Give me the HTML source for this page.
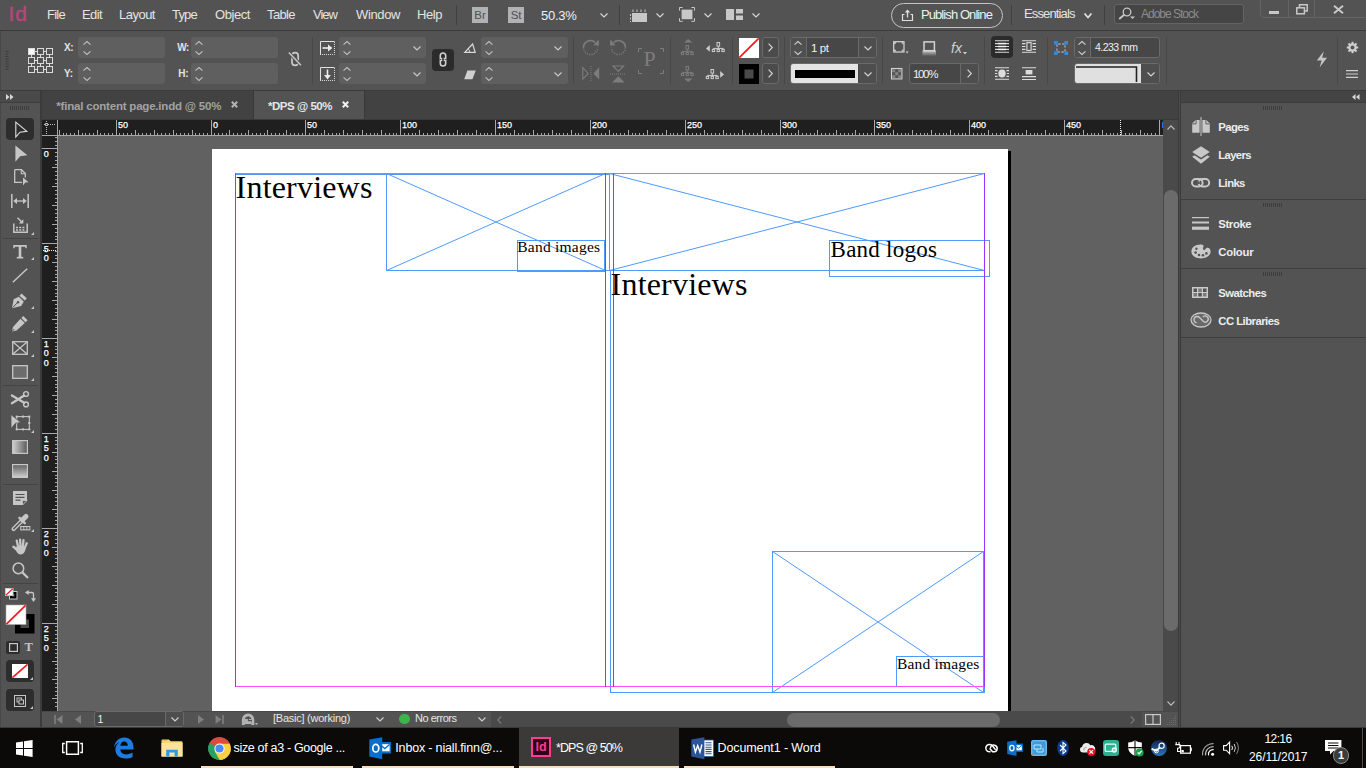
<!DOCTYPE html>
<html lang="en"><head><meta charset="utf-8"><title>*DPS @ 50% - Adobe InDesign</title>
<style>
html,body{margin:0;padding:0;}
body{width:1366px;height:768px;overflow:hidden;background:#535353;position:relative;font-family:"Liberation Sans",sans-serif;}
.b{position:absolute;box-sizing:border-box;}
.t{position:absolute;white-space:nowrap;}
.sf{font-family:"Liberation Serif",serif;}
svg{overflow:visible;}
</style></head>
<body>
<!-- canvas -->
<div class="b" style="left:42px;top:91px;width:1136px;height:29px;background:#424242;"></div>
<div class="b" style="left:42px;top:91px;width:212px;height:29px;background:#424242;border-right:1px solid #383838;"></div>
<span class="t" style="left:56.3px;top:98.5px;font-size:11.5px;line-height:14px;color:#a2a2a2;font-weight:700;letter-spacing:-0.20px;">*final content page.indd @ 50%</span>
<svg class="b" style="left:230.7px;top:101.3px;" width="7" height="7" viewBox="0 0 7 7"><path d="M0.8 0.8L6.2 6.2M6.2 0.8L0.8 6.2" stroke="#b4b4b4" stroke-width="2" fill="none"/></svg>
<div class="b" style="left:254px;top:91px;width:110px;height:29px;background:#535353;"></div>
<span class="t" style="left:268.0px;top:98.5px;font-size:11.5px;line-height:14px;color:#e6e6e6;font-weight:700;letter-spacing:-0.47px;">*DPS @ 50%</span>
<svg class="b" style="left:341.5px;top:101.3px;" width="7" height="7" viewBox="0 0 7 7"><path d="M0.8 0.8L6.2 6.2M6.2 0.8L0.8 6.2" stroke="#f0f0f0" stroke-width="2" fill="none"/></svg>
<div class="b" style="left:364px;top:91px;width:1px;height:29px;background:#3a3a3a;"></div>
<div class="b" style="left:42px;top:119px;width:1136px;height:1px;background:#3a3a3a;"></div>
<div class="b" style="left:58px;top:136px;width:1105px;height:575px;background:#616161;"></div>
<div class="b" style="left:212px;top:149px;width:796px;height:562px;background:#fff;"></div>
<div class="b" style="left:1008px;top:151px;width:2.8px;height:560px;background:#000;"></div>
<svg class="b" style="left:0px;top:0px;" width="1366" height="768" viewBox="0 0 1366 768"><rect x="235.5" y="174.5" width="370.0" height="512.0" fill="none" stroke="#4f99ff"/><line x1="605" y1="174.5" x2="610" y2="174.5" stroke="#4f99ff" stroke-width="1"/><line x1="605" y1="270.5" x2="610" y2="270.5" stroke="#4f99ff" stroke-width="1"/><rect x="386.5" y="173.5" width="219.0" height="97.0" fill="none" stroke="#4f99ff"/><line x1="386.5" y1="173.5" x2="605.5" y2="270.5" stroke="#4f99ff" stroke-width="1"/><line x1="386.5" y1="270.5" x2="605.5" y2="173.5" stroke="#4f99ff" stroke-width="1"/><rect x="517.5" y="240.5" width="87.0" height="31.0" fill="none" stroke="#4f99ff"/><rect x="609.5" y="173.5" width="375.0" height="97.0" fill="none" stroke="#4f99ff"/><line x1="609.5" y1="173.5" x2="984.5" y2="270.5" stroke="#4f99ff" stroke-width="1"/><line x1="609.5" y1="270.5" x2="984.5" y2="173.5" stroke="#4f99ff" stroke-width="1"/><rect x="829.5" y="240.5" width="160.0" height="36.0" fill="none" stroke="#4f99ff"/><rect x="610.5" y="270.5" width="374.0" height="422.0" fill="none" stroke="#4f99ff"/><rect x="772.5" y="551.5" width="211.0" height="141.0" fill="none" stroke="#4f99ff"/><line x1="772.5" y1="551.5" x2="983.5" y2="692.5" stroke="#4f99ff" stroke-width="1"/><line x1="772.5" y1="692.5" x2="983.5" y2="551.5" stroke="#4f99ff" stroke-width="1"/><rect x="896.5" y="656.5" width="87.0" height="30.0" fill="none" stroke="#4f99ff"/><line x1="235" y1="173.5" x2="985" y2="173.5" stroke="#ff4fff" stroke-width="1"/><line x1="235" y1="686.5" x2="985" y2="686.5" stroke="#ff4fff" stroke-width="1"/><line x1="235.5" y1="173" x2="235.5" y2="687" stroke="#9933ff" stroke-width="1"/><line x1="605.5" y1="173" x2="605.5" y2="687" stroke="#9933ff" stroke-width="1"/><line x1="613.5" y1="173" x2="613.5" y2="687" stroke="#9933ff" stroke-width="1"/><line x1="984.5" y1="173" x2="984.5" y2="687" stroke="#9933ff" stroke-width="1"/></svg>
<span class="t sf" style="left:235.6px;top:168.2px;font-size:32px;line-height:38px;color:#000;letter-spacing:0.19px;">Interviews</span>
<span class="t sf" style="left:610.6px;top:265.2px;font-size:32px;line-height:38px;color:#000;letter-spacing:0.19px;">Interviews</span>
<span class="t sf" style="left:517.3px;top:237.1px;font-size:15.5px;line-height:19px;color:#000;letter-spacing:0.23px;">Band images</span>
<span class="t sf" style="left:897.0px;top:654.1px;font-size:15.5px;line-height:19px;color:#000;letter-spacing:0.18px;">Band images</span>
<span class="t sf" style="left:830.6px;top:235.6px;font-size:23px;line-height:28px;color:#000;letter-spacing:0.24px;">Band logos</span>
<div class="b" style="left:42px;top:120px;width:1121px;height:16px;background:#1f1f1f;"></div>
<div class="b" style="left:42px;top:136px;width:16px;height:575px;background:#1f1f1f;"></div>
<svg class="b" style="left:0px;top:0px;shape-rendering:crispEdges;" width="1366" height="768" viewBox="0 0 1366 768"><line x1="59.5" y1="130" x2="59.5" y2="135" stroke="#a8a8a8"/><line x1="63.5" y1="133" x2="63.5" y2="135" stroke="#a8a8a8"/><line x1="66.5" y1="133" x2="66.5" y2="135" stroke="#a8a8a8"/><line x1="70.5" y1="133" x2="70.5" y2="135" stroke="#a8a8a8"/><line x1="74.5" y1="133" x2="74.5" y2="135" stroke="#a8a8a8"/><line x1="78.5" y1="130" x2="78.5" y2="135" stroke="#a8a8a8"/><line x1="82.5" y1="133" x2="82.5" y2="135" stroke="#a8a8a8"/><line x1="85.5" y1="133" x2="85.5" y2="135" stroke="#a8a8a8"/><line x1="89.5" y1="133" x2="89.5" y2="135" stroke="#a8a8a8"/><line x1="93.5" y1="133" x2="93.5" y2="135" stroke="#a8a8a8"/><line x1="97.5" y1="130" x2="97.5" y2="135" stroke="#a8a8a8"/><line x1="100.5" y1="133" x2="100.5" y2="135" stroke="#a8a8a8"/><line x1="104.5" y1="133" x2="104.5" y2="135" stroke="#a8a8a8"/><line x1="108.5" y1="133" x2="108.5" y2="135" stroke="#a8a8a8"/><line x1="112.5" y1="133" x2="112.5" y2="135" stroke="#a8a8a8"/><line x1="116.5" y1="120" x2="116.5" y2="135" stroke="#a8a8a8"/><line x1="119.5" y1="133" x2="119.5" y2="135" stroke="#a8a8a8"/><line x1="123.5" y1="133" x2="123.5" y2="135" stroke="#a8a8a8"/><line x1="127.5" y1="133" x2="127.5" y2="135" stroke="#a8a8a8"/><line x1="131.5" y1="133" x2="131.5" y2="135" stroke="#a8a8a8"/><line x1="135.5" y1="130" x2="135.5" y2="135" stroke="#a8a8a8"/><line x1="138.5" y1="133" x2="138.5" y2="135" stroke="#a8a8a8"/><line x1="142.5" y1="133" x2="142.5" y2="135" stroke="#a8a8a8"/><line x1="146.5" y1="133" x2="146.5" y2="135" stroke="#a8a8a8"/><line x1="150.5" y1="133" x2="150.5" y2="135" stroke="#a8a8a8"/><line x1="154.5" y1="130" x2="154.5" y2="135" stroke="#a8a8a8"/><line x1="157.5" y1="133" x2="157.5" y2="135" stroke="#a8a8a8"/><line x1="161.5" y1="133" x2="161.5" y2="135" stroke="#a8a8a8"/><line x1="165.5" y1="133" x2="165.5" y2="135" stroke="#a8a8a8"/><line x1="169.5" y1="133" x2="169.5" y2="135" stroke="#a8a8a8"/><line x1="173.5" y1="130" x2="173.5" y2="135" stroke="#a8a8a8"/><line x1="176.5" y1="133" x2="176.5" y2="135" stroke="#a8a8a8"/><line x1="180.5" y1="133" x2="180.5" y2="135" stroke="#a8a8a8"/><line x1="184.5" y1="133" x2="184.5" y2="135" stroke="#a8a8a8"/><line x1="188.5" y1="133" x2="188.5" y2="135" stroke="#a8a8a8"/><line x1="192.5" y1="130" x2="192.5" y2="135" stroke="#a8a8a8"/><line x1="195.5" y1="133" x2="195.5" y2="135" stroke="#a8a8a8"/><line x1="199.5" y1="133" x2="199.5" y2="135" stroke="#a8a8a8"/><line x1="203.5" y1="133" x2="203.5" y2="135" stroke="#a8a8a8"/><line x1="207.5" y1="133" x2="207.5" y2="135" stroke="#a8a8a8"/><line x1="211.5" y1="120" x2="211.5" y2="135" stroke="#a8a8a8"/><line x1="214.5" y1="133" x2="214.5" y2="135" stroke="#a8a8a8"/><line x1="218.5" y1="133" x2="218.5" y2="135" stroke="#a8a8a8"/><line x1="222.5" y1="133" x2="222.5" y2="135" stroke="#a8a8a8"/><line x1="226.5" y1="133" x2="226.5" y2="135" stroke="#a8a8a8"/><line x1="229.5" y1="130" x2="229.5" y2="135" stroke="#a8a8a8"/><line x1="233.5" y1="133" x2="233.5" y2="135" stroke="#a8a8a8"/><line x1="237.5" y1="133" x2="237.5" y2="135" stroke="#a8a8a8"/><line x1="241.5" y1="133" x2="241.5" y2="135" stroke="#a8a8a8"/><line x1="245.5" y1="133" x2="245.5" y2="135" stroke="#a8a8a8"/><line x1="248.5" y1="130" x2="248.5" y2="135" stroke="#a8a8a8"/><line x1="252.5" y1="133" x2="252.5" y2="135" stroke="#a8a8a8"/><line x1="256.5" y1="133" x2="256.5" y2="135" stroke="#a8a8a8"/><line x1="260.5" y1="133" x2="260.5" y2="135" stroke="#a8a8a8"/><line x1="264.5" y1="133" x2="264.5" y2="135" stroke="#a8a8a8"/><line x1="267.5" y1="130" x2="267.5" y2="135" stroke="#a8a8a8"/><line x1="271.5" y1="133" x2="271.5" y2="135" stroke="#a8a8a8"/><line x1="275.5" y1="133" x2="275.5" y2="135" stroke="#a8a8a8"/><line x1="279.5" y1="133" x2="279.5" y2="135" stroke="#a8a8a8"/><line x1="283.5" y1="133" x2="283.5" y2="135" stroke="#a8a8a8"/><line x1="286.5" y1="130" x2="286.5" y2="135" stroke="#a8a8a8"/><line x1="290.5" y1="133" x2="290.5" y2="135" stroke="#a8a8a8"/><line x1="294.5" y1="133" x2="294.5" y2="135" stroke="#a8a8a8"/><line x1="298.5" y1="133" x2="298.5" y2="135" stroke="#a8a8a8"/><line x1="302.5" y1="133" x2="302.5" y2="135" stroke="#a8a8a8"/><line x1="305.5" y1="120" x2="305.5" y2="135" stroke="#a8a8a8"/><line x1="309.5" y1="133" x2="309.5" y2="135" stroke="#a8a8a8"/><line x1="313.5" y1="133" x2="313.5" y2="135" stroke="#a8a8a8"/><line x1="317.5" y1="133" x2="317.5" y2="135" stroke="#a8a8a8"/><line x1="321.5" y1="133" x2="321.5" y2="135" stroke="#a8a8a8"/><line x1="324.5" y1="130" x2="324.5" y2="135" stroke="#a8a8a8"/><line x1="328.5" y1="133" x2="328.5" y2="135" stroke="#a8a8a8"/><line x1="332.5" y1="133" x2="332.5" y2="135" stroke="#a8a8a8"/><line x1="336.5" y1="133" x2="336.5" y2="135" stroke="#a8a8a8"/><line x1="339.5" y1="133" x2="339.5" y2="135" stroke="#a8a8a8"/><line x1="343.5" y1="130" x2="343.5" y2="135" stroke="#a8a8a8"/><line x1="347.5" y1="133" x2="347.5" y2="135" stroke="#a8a8a8"/><line x1="351.5" y1="133" x2="351.5" y2="135" stroke="#a8a8a8"/><line x1="355.5" y1="133" x2="355.5" y2="135" stroke="#a8a8a8"/><line x1="358.5" y1="133" x2="358.5" y2="135" stroke="#a8a8a8"/><line x1="362.5" y1="130" x2="362.5" y2="135" stroke="#a8a8a8"/><line x1="366.5" y1="133" x2="366.5" y2="135" stroke="#a8a8a8"/><line x1="370.5" y1="133" x2="370.5" y2="135" stroke="#a8a8a8"/><line x1="374.5" y1="133" x2="374.5" y2="135" stroke="#a8a8a8"/><line x1="377.5" y1="133" x2="377.5" y2="135" stroke="#a8a8a8"/><line x1="381.5" y1="130" x2="381.5" y2="135" stroke="#a8a8a8"/><line x1="385.5" y1="133" x2="385.5" y2="135" stroke="#a8a8a8"/><line x1="389.5" y1="133" x2="389.5" y2="135" stroke="#a8a8a8"/><line x1="393.5" y1="133" x2="393.5" y2="135" stroke="#a8a8a8"/><line x1="396.5" y1="133" x2="396.5" y2="135" stroke="#a8a8a8"/><line x1="400.5" y1="120" x2="400.5" y2="135" stroke="#a8a8a8"/><line x1="404.5" y1="133" x2="404.5" y2="135" stroke="#a8a8a8"/><line x1="408.5" y1="133" x2="408.5" y2="135" stroke="#a8a8a8"/><line x1="412.5" y1="133" x2="412.5" y2="135" stroke="#a8a8a8"/><line x1="415.5" y1="133" x2="415.5" y2="135" stroke="#a8a8a8"/><line x1="419.5" y1="130" x2="419.5" y2="135" stroke="#a8a8a8"/><line x1="423.5" y1="133" x2="423.5" y2="135" stroke="#a8a8a8"/><line x1="427.5" y1="133" x2="427.5" y2="135" stroke="#a8a8a8"/><line x1="431.5" y1="133" x2="431.5" y2="135" stroke="#a8a8a8"/><line x1="434.5" y1="133" x2="434.5" y2="135" stroke="#a8a8a8"/><line x1="438.5" y1="130" x2="438.5" y2="135" stroke="#a8a8a8"/><line x1="442.5" y1="133" x2="442.5" y2="135" stroke="#a8a8a8"/><line x1="446.5" y1="133" x2="446.5" y2="135" stroke="#a8a8a8"/><line x1="449.5" y1="133" x2="449.5" y2="135" stroke="#a8a8a8"/><line x1="453.5" y1="133" x2="453.5" y2="135" stroke="#a8a8a8"/><line x1="457.5" y1="130" x2="457.5" y2="135" stroke="#a8a8a8"/><line x1="461.5" y1="133" x2="461.5" y2="135" stroke="#a8a8a8"/><line x1="465.5" y1="133" x2="465.5" y2="135" stroke="#a8a8a8"/><line x1="468.5" y1="133" x2="468.5" y2="135" stroke="#a8a8a8"/><line x1="472.5" y1="133" x2="472.5" y2="135" stroke="#a8a8a8"/><line x1="476.5" y1="130" x2="476.5" y2="135" stroke="#a8a8a8"/><line x1="480.5" y1="133" x2="480.5" y2="135" stroke="#a8a8a8"/><line x1="484.5" y1="133" x2="484.5" y2="135" stroke="#a8a8a8"/><line x1="487.5" y1="133" x2="487.5" y2="135" stroke="#a8a8a8"/><line x1="491.5" y1="133" x2="491.5" y2="135" stroke="#a8a8a8"/><line x1="495.5" y1="120" x2="495.5" y2="135" stroke="#a8a8a8"/><line x1="499.5" y1="133" x2="499.5" y2="135" stroke="#a8a8a8"/><line x1="503.5" y1="133" x2="503.5" y2="135" stroke="#a8a8a8"/><line x1="506.5" y1="133" x2="506.5" y2="135" stroke="#a8a8a8"/><line x1="510.5" y1="133" x2="510.5" y2="135" stroke="#a8a8a8"/><line x1="514.5" y1="130" x2="514.5" y2="135" stroke="#a8a8a8"/><line x1="518.5" y1="133" x2="518.5" y2="135" stroke="#a8a8a8"/><line x1="522.5" y1="133" x2="522.5" y2="135" stroke="#a8a8a8"/><line x1="525.5" y1="133" x2="525.5" y2="135" stroke="#a8a8a8"/><line x1="529.5" y1="133" x2="529.5" y2="135" stroke="#a8a8a8"/><line x1="533.5" y1="130" x2="533.5" y2="135" stroke="#a8a8a8"/><line x1="537.5" y1="133" x2="537.5" y2="135" stroke="#a8a8a8"/><line x1="541.5" y1="133" x2="541.5" y2="135" stroke="#a8a8a8"/><line x1="544.5" y1="133" x2="544.5" y2="135" stroke="#a8a8a8"/><line x1="548.5" y1="133" x2="548.5" y2="135" stroke="#a8a8a8"/><line x1="552.5" y1="130" x2="552.5" y2="135" stroke="#a8a8a8"/><line x1="556.5" y1="133" x2="556.5" y2="135" stroke="#a8a8a8"/><line x1="559.5" y1="133" x2="559.5" y2="135" stroke="#a8a8a8"/><line x1="563.5" y1="133" x2="563.5" y2="135" stroke="#a8a8a8"/><line x1="567.5" y1="133" x2="567.5" y2="135" stroke="#a8a8a8"/><line x1="571.5" y1="130" x2="571.5" y2="135" stroke="#a8a8a8"/><line x1="575.5" y1="133" x2="575.5" y2="135" stroke="#a8a8a8"/><line x1="578.5" y1="133" x2="578.5" y2="135" stroke="#a8a8a8"/><line x1="582.5" y1="133" x2="582.5" y2="135" stroke="#a8a8a8"/><line x1="586.5" y1="133" x2="586.5" y2="135" stroke="#a8a8a8"/><line x1="590.5" y1="120" x2="590.5" y2="135" stroke="#a8a8a8"/><line x1="594.5" y1="133" x2="594.5" y2="135" stroke="#a8a8a8"/><line x1="597.5" y1="133" x2="597.5" y2="135" stroke="#a8a8a8"/><line x1="601.5" y1="133" x2="601.5" y2="135" stroke="#a8a8a8"/><line x1="605.5" y1="133" x2="605.5" y2="135" stroke="#a8a8a8"/><line x1="609.5" y1="130" x2="609.5" y2="135" stroke="#a8a8a8"/><line x1="613.5" y1="133" x2="613.5" y2="135" stroke="#a8a8a8"/><line x1="616.5" y1="133" x2="616.5" y2="135" stroke="#a8a8a8"/><line x1="620.5" y1="133" x2="620.5" y2="135" stroke="#a8a8a8"/><line x1="624.5" y1="133" x2="624.5" y2="135" stroke="#a8a8a8"/><line x1="628.5" y1="130" x2="628.5" y2="135" stroke="#a8a8a8"/><line x1="632.5" y1="133" x2="632.5" y2="135" stroke="#a8a8a8"/><line x1="635.5" y1="133" x2="635.5" y2="135" stroke="#a8a8a8"/><line x1="639.5" y1="133" x2="639.5" y2="135" stroke="#a8a8a8"/><line x1="643.5" y1="133" x2="643.5" y2="135" stroke="#a8a8a8"/><line x1="647.5" y1="130" x2="647.5" y2="135" stroke="#a8a8a8"/><line x1="651.5" y1="133" x2="651.5" y2="135" stroke="#a8a8a8"/><line x1="654.5" y1="133" x2="654.5" y2="135" stroke="#a8a8a8"/><line x1="658.5" y1="133" x2="658.5" y2="135" stroke="#a8a8a8"/><line x1="662.5" y1="133" x2="662.5" y2="135" stroke="#a8a8a8"/><line x1="666.5" y1="130" x2="666.5" y2="135" stroke="#a8a8a8"/><line x1="670.5" y1="133" x2="670.5" y2="135" stroke="#a8a8a8"/><line x1="673.5" y1="133" x2="673.5" y2="135" stroke="#a8a8a8"/><line x1="677.5" y1="133" x2="677.5" y2="135" stroke="#a8a8a8"/><line x1="681.5" y1="133" x2="681.5" y2="135" stroke="#a8a8a8"/><line x1="685.5" y1="120" x2="685.5" y2="135" stroke="#a8a8a8"/><line x1="688.5" y1="133" x2="688.5" y2="135" stroke="#a8a8a8"/><line x1="692.5" y1="133" x2="692.5" y2="135" stroke="#a8a8a8"/><line x1="696.5" y1="133" x2="696.5" y2="135" stroke="#a8a8a8"/><line x1="700.5" y1="133" x2="700.5" y2="135" stroke="#a8a8a8"/><line x1="704.5" y1="130" x2="704.5" y2="135" stroke="#a8a8a8"/><line x1="707.5" y1="133" x2="707.5" y2="135" stroke="#a8a8a8"/><line x1="711.5" y1="133" x2="711.5" y2="135" stroke="#a8a8a8"/><line x1="715.5" y1="133" x2="715.5" y2="135" stroke="#a8a8a8"/><line x1="719.5" y1="133" x2="719.5" y2="135" stroke="#a8a8a8"/><line x1="723.5" y1="130" x2="723.5" y2="135" stroke="#a8a8a8"/><line x1="726.5" y1="133" x2="726.5" y2="135" stroke="#a8a8a8"/><line x1="730.5" y1="133" x2="730.5" y2="135" stroke="#a8a8a8"/><line x1="734.5" y1="133" x2="734.5" y2="135" stroke="#a8a8a8"/><line x1="738.5" y1="133" x2="738.5" y2="135" stroke="#a8a8a8"/><line x1="742.5" y1="130" x2="742.5" y2="135" stroke="#a8a8a8"/><line x1="745.5" y1="133" x2="745.5" y2="135" stroke="#a8a8a8"/><line x1="749.5" y1="133" x2="749.5" y2="135" stroke="#a8a8a8"/><line x1="753.5" y1="133" x2="753.5" y2="135" stroke="#a8a8a8"/><line x1="757.5" y1="133" x2="757.5" y2="135" stroke="#a8a8a8"/><line x1="761.5" y1="130" x2="761.5" y2="135" stroke="#a8a8a8"/><line x1="764.5" y1="133" x2="764.5" y2="135" stroke="#a8a8a8"/><line x1="768.5" y1="133" x2="768.5" y2="135" stroke="#a8a8a8"/><line x1="772.5" y1="133" x2="772.5" y2="135" stroke="#a8a8a8"/><line x1="776.5" y1="133" x2="776.5" y2="135" stroke="#a8a8a8"/><line x1="780.5" y1="120" x2="780.5" y2="135" stroke="#a8a8a8"/><line x1="783.5" y1="133" x2="783.5" y2="135" stroke="#a8a8a8"/><line x1="787.5" y1="133" x2="787.5" y2="135" stroke="#a8a8a8"/><line x1="791.5" y1="133" x2="791.5" y2="135" stroke="#a8a8a8"/><line x1="795.5" y1="133" x2="795.5" y2="135" stroke="#a8a8a8"/><line x1="798.5" y1="130" x2="798.5" y2="135" stroke="#a8a8a8"/><line x1="802.5" y1="133" x2="802.5" y2="135" stroke="#a8a8a8"/><line x1="806.5" y1="133" x2="806.5" y2="135" stroke="#a8a8a8"/><line x1="810.5" y1="133" x2="810.5" y2="135" stroke="#a8a8a8"/><line x1="814.5" y1="133" x2="814.5" y2="135" stroke="#a8a8a8"/><line x1="817.5" y1="130" x2="817.5" y2="135" stroke="#a8a8a8"/><line x1="821.5" y1="133" x2="821.5" y2="135" stroke="#a8a8a8"/><line x1="825.5" y1="133" x2="825.5" y2="135" stroke="#a8a8a8"/><line x1="829.5" y1="133" x2="829.5" y2="135" stroke="#a8a8a8"/><line x1="833.5" y1="133" x2="833.5" y2="135" stroke="#a8a8a8"/><line x1="836.5" y1="130" x2="836.5" y2="135" stroke="#a8a8a8"/><line x1="840.5" y1="133" x2="840.5" y2="135" stroke="#a8a8a8"/><line x1="844.5" y1="133" x2="844.5" y2="135" stroke="#a8a8a8"/><line x1="848.5" y1="133" x2="848.5" y2="135" stroke="#a8a8a8"/><line x1="852.5" y1="133" x2="852.5" y2="135" stroke="#a8a8a8"/><line x1="855.5" y1="130" x2="855.5" y2="135" stroke="#a8a8a8"/><line x1="859.5" y1="133" x2="859.5" y2="135" stroke="#a8a8a8"/><line x1="863.5" y1="133" x2="863.5" y2="135" stroke="#a8a8a8"/><line x1="867.5" y1="133" x2="867.5" y2="135" stroke="#a8a8a8"/><line x1="871.5" y1="133" x2="871.5" y2="135" stroke="#a8a8a8"/><line x1="874.5" y1="120" x2="874.5" y2="135" stroke="#a8a8a8"/><line x1="878.5" y1="133" x2="878.5" y2="135" stroke="#a8a8a8"/><line x1="882.5" y1="133" x2="882.5" y2="135" stroke="#a8a8a8"/><line x1="886.5" y1="133" x2="886.5" y2="135" stroke="#a8a8a8"/><line x1="890.5" y1="133" x2="890.5" y2="135" stroke="#a8a8a8"/><line x1="893.5" y1="130" x2="893.5" y2="135" stroke="#a8a8a8"/><line x1="897.5" y1="133" x2="897.5" y2="135" stroke="#a8a8a8"/><line x1="901.5" y1="133" x2="901.5" y2="135" stroke="#a8a8a8"/><line x1="905.5" y1="133" x2="905.5" y2="135" stroke="#a8a8a8"/><line x1="908.5" y1="133" x2="908.5" y2="135" stroke="#a8a8a8"/><line x1="912.5" y1="130" x2="912.5" y2="135" stroke="#a8a8a8"/><line x1="916.5" y1="133" x2="916.5" y2="135" stroke="#a8a8a8"/><line x1="920.5" y1="133" x2="920.5" y2="135" stroke="#a8a8a8"/><line x1="924.5" y1="133" x2="924.5" y2="135" stroke="#a8a8a8"/><line x1="927.5" y1="133" x2="927.5" y2="135" stroke="#a8a8a8"/><line x1="931.5" y1="130" x2="931.5" y2="135" stroke="#a8a8a8"/><line x1="935.5" y1="133" x2="935.5" y2="135" stroke="#a8a8a8"/><line x1="939.5" y1="133" x2="939.5" y2="135" stroke="#a8a8a8"/><line x1="943.5" y1="133" x2="943.5" y2="135" stroke="#a8a8a8"/><line x1="946.5" y1="133" x2="946.5" y2="135" stroke="#a8a8a8"/><line x1="950.5" y1="130" x2="950.5" y2="135" stroke="#a8a8a8"/><line x1="954.5" y1="133" x2="954.5" y2="135" stroke="#a8a8a8"/><line x1="958.5" y1="133" x2="958.5" y2="135" stroke="#a8a8a8"/><line x1="962.5" y1="133" x2="962.5" y2="135" stroke="#a8a8a8"/><line x1="965.5" y1="133" x2="965.5" y2="135" stroke="#a8a8a8"/><line x1="969.5" y1="120" x2="969.5" y2="135" stroke="#a8a8a8"/><line x1="973.5" y1="133" x2="973.5" y2="135" stroke="#a8a8a8"/><line x1="977.5" y1="133" x2="977.5" y2="135" stroke="#a8a8a8"/><line x1="981.5" y1="133" x2="981.5" y2="135" stroke="#a8a8a8"/><line x1="984.5" y1="133" x2="984.5" y2="135" stroke="#a8a8a8"/><line x1="988.5" y1="130" x2="988.5" y2="135" stroke="#a8a8a8"/><line x1="992.5" y1="133" x2="992.5" y2="135" stroke="#a8a8a8"/><line x1="996.5" y1="133" x2="996.5" y2="135" stroke="#a8a8a8"/><line x1="1000.5" y1="133" x2="1000.5" y2="135" stroke="#a8a8a8"/><line x1="1003.5" y1="133" x2="1003.5" y2="135" stroke="#a8a8a8"/><line x1="1007.5" y1="130" x2="1007.5" y2="135" stroke="#a8a8a8"/><line x1="1011.5" y1="133" x2="1011.5" y2="135" stroke="#a8a8a8"/><line x1="1015.5" y1="133" x2="1015.5" y2="135" stroke="#a8a8a8"/><line x1="1018.5" y1="133" x2="1018.5" y2="135" stroke="#a8a8a8"/><line x1="1022.5" y1="133" x2="1022.5" y2="135" stroke="#a8a8a8"/><line x1="1026.5" y1="130" x2="1026.5" y2="135" stroke="#a8a8a8"/><line x1="1030.5" y1="133" x2="1030.5" y2="135" stroke="#a8a8a8"/><line x1="1034.5" y1="133" x2="1034.5" y2="135" stroke="#a8a8a8"/><line x1="1037.5" y1="133" x2="1037.5" y2="135" stroke="#a8a8a8"/><line x1="1041.5" y1="133" x2="1041.5" y2="135" stroke="#a8a8a8"/><line x1="1045.5" y1="130" x2="1045.5" y2="135" stroke="#a8a8a8"/><line x1="1049.5" y1="133" x2="1049.5" y2="135" stroke="#a8a8a8"/><line x1="1053.5" y1="133" x2="1053.5" y2="135" stroke="#a8a8a8"/><line x1="1056.5" y1="133" x2="1056.5" y2="135" stroke="#a8a8a8"/><line x1="1060.5" y1="133" x2="1060.5" y2="135" stroke="#a8a8a8"/><line x1="1064.5" y1="120" x2="1064.5" y2="135" stroke="#a8a8a8"/><line x1="1068.5" y1="133" x2="1068.5" y2="135" stroke="#a8a8a8"/><line x1="1072.5" y1="133" x2="1072.5" y2="135" stroke="#a8a8a8"/><line x1="1075.5" y1="133" x2="1075.5" y2="135" stroke="#a8a8a8"/><line x1="1079.5" y1="133" x2="1079.5" y2="135" stroke="#a8a8a8"/><line x1="1083.5" y1="130" x2="1083.5" y2="135" stroke="#a8a8a8"/><line x1="1087.5" y1="133" x2="1087.5" y2="135" stroke="#a8a8a8"/><line x1="1091.5" y1="133" x2="1091.5" y2="135" stroke="#a8a8a8"/><line x1="1094.5" y1="133" x2="1094.5" y2="135" stroke="#a8a8a8"/><line x1="1098.5" y1="133" x2="1098.5" y2="135" stroke="#a8a8a8"/><line x1="1102.5" y1="130" x2="1102.5" y2="135" stroke="#a8a8a8"/><line x1="1106.5" y1="133" x2="1106.5" y2="135" stroke="#a8a8a8"/><line x1="1110.5" y1="133" x2="1110.5" y2="135" stroke="#a8a8a8"/><line x1="1113.5" y1="133" x2="1113.5" y2="135" stroke="#a8a8a8"/><line x1="1117.5" y1="133" x2="1117.5" y2="135" stroke="#a8a8a8"/><line x1="1121.5" y1="130" x2="1121.5" y2="135" stroke="#a8a8a8"/><line x1="1125.5" y1="133" x2="1125.5" y2="135" stroke="#a8a8a8"/><line x1="1129.5" y1="133" x2="1129.5" y2="135" stroke="#a8a8a8"/><line x1="1132.5" y1="133" x2="1132.5" y2="135" stroke="#a8a8a8"/><line x1="1136.5" y1="133" x2="1136.5" y2="135" stroke="#a8a8a8"/><line x1="1140.5" y1="130" x2="1140.5" y2="135" stroke="#a8a8a8"/><line x1="1144.5" y1="133" x2="1144.5" y2="135" stroke="#a8a8a8"/><line x1="1147.5" y1="133" x2="1147.5" y2="135" stroke="#a8a8a8"/><line x1="1151.5" y1="133" x2="1151.5" y2="135" stroke="#a8a8a8"/><line x1="1155.5" y1="133" x2="1155.5" y2="135" stroke="#a8a8a8"/><line x1="1159.5" y1="120" x2="1159.5" y2="135" stroke="#a8a8a8"/><line x1="42" y1="135.5" x2="1163" y2="135.5" stroke="#a8a8a8"/><line x1="57.5" y1="120" x2="57.5" y2="711" stroke="#a8a8a8"/><line x1="55" y1="137.5" x2="57" y2="137.5" stroke="#a8a8a8"/><line x1="55" y1="141.5" x2="57" y2="141.5" stroke="#a8a8a8"/><line x1="55" y1="145.5" x2="57" y2="145.5" stroke="#a8a8a8"/><line x1="42" y1="148.5" x2="57" y2="148.5" stroke="#a8a8a8"/><line x1="55" y1="152.5" x2="57" y2="152.5" stroke="#a8a8a8"/><line x1="55" y1="156.5" x2="57" y2="156.5" stroke="#a8a8a8"/><line x1="55" y1="160.5" x2="57" y2="160.5" stroke="#a8a8a8"/><line x1="55" y1="164.5" x2="57" y2="164.5" stroke="#a8a8a8"/><line x1="52" y1="167.5" x2="57" y2="167.5" stroke="#a8a8a8"/><line x1="55" y1="171.5" x2="57" y2="171.5" stroke="#a8a8a8"/><line x1="55" y1="175.5" x2="57" y2="175.5" stroke="#a8a8a8"/><line x1="55" y1="179.5" x2="57" y2="179.5" stroke="#a8a8a8"/><line x1="55" y1="183.5" x2="57" y2="183.5" stroke="#a8a8a8"/><line x1="52" y1="186.5" x2="57" y2="186.5" stroke="#a8a8a8"/><line x1="55" y1="190.5" x2="57" y2="190.5" stroke="#a8a8a8"/><line x1="55" y1="194.5" x2="57" y2="194.5" stroke="#a8a8a8"/><line x1="55" y1="198.5" x2="57" y2="198.5" stroke="#a8a8a8"/><line x1="55" y1="202.5" x2="57" y2="202.5" stroke="#a8a8a8"/><line x1="52" y1="205.5" x2="57" y2="205.5" stroke="#a8a8a8"/><line x1="55" y1="209.5" x2="57" y2="209.5" stroke="#a8a8a8"/><line x1="55" y1="213.5" x2="57" y2="213.5" stroke="#a8a8a8"/><line x1="55" y1="217.5" x2="57" y2="217.5" stroke="#a8a8a8"/><line x1="55" y1="220.5" x2="57" y2="220.5" stroke="#a8a8a8"/><line x1="52" y1="224.5" x2="57" y2="224.5" stroke="#a8a8a8"/><line x1="55" y1="228.5" x2="57" y2="228.5" stroke="#a8a8a8"/><line x1="55" y1="232.5" x2="57" y2="232.5" stroke="#a8a8a8"/><line x1="55" y1="236.5" x2="57" y2="236.5" stroke="#a8a8a8"/><line x1="55" y1="239.5" x2="57" y2="239.5" stroke="#a8a8a8"/><line x1="42" y1="243.5" x2="57" y2="243.5" stroke="#a8a8a8"/><line x1="55" y1="247.5" x2="57" y2="247.5" stroke="#a8a8a8"/><line x1="55" y1="251.5" x2="57" y2="251.5" stroke="#a8a8a8"/><line x1="55" y1="255.5" x2="57" y2="255.5" stroke="#a8a8a8"/><line x1="55" y1="258.5" x2="57" y2="258.5" stroke="#a8a8a8"/><line x1="52" y1="262.5" x2="57" y2="262.5" stroke="#a8a8a8"/><line x1="55" y1="266.5" x2="57" y2="266.5" stroke="#a8a8a8"/><line x1="55" y1="270.5" x2="57" y2="270.5" stroke="#a8a8a8"/><line x1="55" y1="274.5" x2="57" y2="274.5" stroke="#a8a8a8"/><line x1="55" y1="277.5" x2="57" y2="277.5" stroke="#a8a8a8"/><line x1="52" y1="281.5" x2="57" y2="281.5" stroke="#a8a8a8"/><line x1="55" y1="285.5" x2="57" y2="285.5" stroke="#a8a8a8"/><line x1="55" y1="289.5" x2="57" y2="289.5" stroke="#a8a8a8"/><line x1="55" y1="293.5" x2="57" y2="293.5" stroke="#a8a8a8"/><line x1="55" y1="296.5" x2="57" y2="296.5" stroke="#a8a8a8"/><line x1="52" y1="300.5" x2="57" y2="300.5" stroke="#a8a8a8"/><line x1="55" y1="304.5" x2="57" y2="304.5" stroke="#a8a8a8"/><line x1="55" y1="308.5" x2="57" y2="308.5" stroke="#a8a8a8"/><line x1="55" y1="312.5" x2="57" y2="312.5" stroke="#a8a8a8"/><line x1="55" y1="315.5" x2="57" y2="315.5" stroke="#a8a8a8"/><line x1="52" y1="319.5" x2="57" y2="319.5" stroke="#a8a8a8"/><line x1="55" y1="323.5" x2="57" y2="323.5" stroke="#a8a8a8"/><line x1="55" y1="327.5" x2="57" y2="327.5" stroke="#a8a8a8"/><line x1="55" y1="330.5" x2="57" y2="330.5" stroke="#a8a8a8"/><line x1="55" y1="334.5" x2="57" y2="334.5" stroke="#a8a8a8"/><line x1="42" y1="338.5" x2="57" y2="338.5" stroke="#a8a8a8"/><line x1="55" y1="342.5" x2="57" y2="342.5" stroke="#a8a8a8"/><line x1="55" y1="346.5" x2="57" y2="346.5" stroke="#a8a8a8"/><line x1="55" y1="349.5" x2="57" y2="349.5" stroke="#a8a8a8"/><line x1="55" y1="353.5" x2="57" y2="353.5" stroke="#a8a8a8"/><line x1="52" y1="357.5" x2="57" y2="357.5" stroke="#a8a8a8"/><line x1="55" y1="361.5" x2="57" y2="361.5" stroke="#a8a8a8"/><line x1="55" y1="365.5" x2="57" y2="365.5" stroke="#a8a8a8"/><line x1="55" y1="368.5" x2="57" y2="368.5" stroke="#a8a8a8"/><line x1="55" y1="372.5" x2="57" y2="372.5" stroke="#a8a8a8"/><line x1="52" y1="376.5" x2="57" y2="376.5" stroke="#a8a8a8"/><line x1="55" y1="380.5" x2="57" y2="380.5" stroke="#a8a8a8"/><line x1="55" y1="384.5" x2="57" y2="384.5" stroke="#a8a8a8"/><line x1="55" y1="387.5" x2="57" y2="387.5" stroke="#a8a8a8"/><line x1="55" y1="391.5" x2="57" y2="391.5" stroke="#a8a8a8"/><line x1="52" y1="395.5" x2="57" y2="395.5" stroke="#a8a8a8"/><line x1="55" y1="399.5" x2="57" y2="399.5" stroke="#a8a8a8"/><line x1="55" y1="403.5" x2="57" y2="403.5" stroke="#a8a8a8"/><line x1="55" y1="406.5" x2="57" y2="406.5" stroke="#a8a8a8"/><line x1="55" y1="410.5" x2="57" y2="410.5" stroke="#a8a8a8"/><line x1="52" y1="414.5" x2="57" y2="414.5" stroke="#a8a8a8"/><line x1="55" y1="418.5" x2="57" y2="418.5" stroke="#a8a8a8"/><line x1="55" y1="422.5" x2="57" y2="422.5" stroke="#a8a8a8"/><line x1="55" y1="425.5" x2="57" y2="425.5" stroke="#a8a8a8"/><line x1="55" y1="429.5" x2="57" y2="429.5" stroke="#a8a8a8"/><line x1="42" y1="433.5" x2="57" y2="433.5" stroke="#a8a8a8"/><line x1="55" y1="437.5" x2="57" y2="437.5" stroke="#a8a8a8"/><line x1="55" y1="440.5" x2="57" y2="440.5" stroke="#a8a8a8"/><line x1="55" y1="444.5" x2="57" y2="444.5" stroke="#a8a8a8"/><line x1="55" y1="448.5" x2="57" y2="448.5" stroke="#a8a8a8"/><line x1="52" y1="452.5" x2="57" y2="452.5" stroke="#a8a8a8"/><line x1="55" y1="456.5" x2="57" y2="456.5" stroke="#a8a8a8"/><line x1="55" y1="459.5" x2="57" y2="459.5" stroke="#a8a8a8"/><line x1="55" y1="463.5" x2="57" y2="463.5" stroke="#a8a8a8"/><line x1="55" y1="467.5" x2="57" y2="467.5" stroke="#a8a8a8"/><line x1="52" y1="471.5" x2="57" y2="471.5" stroke="#a8a8a8"/><line x1="55" y1="475.5" x2="57" y2="475.5" stroke="#a8a8a8"/><line x1="55" y1="478.5" x2="57" y2="478.5" stroke="#a8a8a8"/><line x1="55" y1="482.5" x2="57" y2="482.5" stroke="#a8a8a8"/><line x1="55" y1="486.5" x2="57" y2="486.5" stroke="#a8a8a8"/><line x1="52" y1="490.5" x2="57" y2="490.5" stroke="#a8a8a8"/><line x1="55" y1="494.5" x2="57" y2="494.5" stroke="#a8a8a8"/><line x1="55" y1="497.5" x2="57" y2="497.5" stroke="#a8a8a8"/><line x1="55" y1="501.5" x2="57" y2="501.5" stroke="#a8a8a8"/><line x1="55" y1="505.5" x2="57" y2="505.5" stroke="#a8a8a8"/><line x1="52" y1="509.5" x2="57" y2="509.5" stroke="#a8a8a8"/><line x1="55" y1="513.5" x2="57" y2="513.5" stroke="#a8a8a8"/><line x1="55" y1="516.5" x2="57" y2="516.5" stroke="#a8a8a8"/><line x1="55" y1="520.5" x2="57" y2="520.5" stroke="#a8a8a8"/><line x1="55" y1="524.5" x2="57" y2="524.5" stroke="#a8a8a8"/><line x1="42" y1="528.5" x2="57" y2="528.5" stroke="#a8a8a8"/><line x1="55" y1="532.5" x2="57" y2="532.5" stroke="#a8a8a8"/><line x1="55" y1="535.5" x2="57" y2="535.5" stroke="#a8a8a8"/><line x1="55" y1="539.5" x2="57" y2="539.5" stroke="#a8a8a8"/><line x1="55" y1="543.5" x2="57" y2="543.5" stroke="#a8a8a8"/><line x1="52" y1="547.5" x2="57" y2="547.5" stroke="#a8a8a8"/><line x1="55" y1="551.5" x2="57" y2="551.5" stroke="#a8a8a8"/><line x1="55" y1="554.5" x2="57" y2="554.5" stroke="#a8a8a8"/><line x1="55" y1="558.5" x2="57" y2="558.5" stroke="#a8a8a8"/><line x1="55" y1="562.5" x2="57" y2="562.5" stroke="#a8a8a8"/><line x1="52" y1="566.5" x2="57" y2="566.5" stroke="#a8a8a8"/><line x1="55" y1="569.5" x2="57" y2="569.5" stroke="#a8a8a8"/><line x1="55" y1="573.5" x2="57" y2="573.5" stroke="#a8a8a8"/><line x1="55" y1="577.5" x2="57" y2="577.5" stroke="#a8a8a8"/><line x1="55" y1="581.5" x2="57" y2="581.5" stroke="#a8a8a8"/><line x1="52" y1="585.5" x2="57" y2="585.5" stroke="#a8a8a8"/><line x1="55" y1="588.5" x2="57" y2="588.5" stroke="#a8a8a8"/><line x1="55" y1="592.5" x2="57" y2="592.5" stroke="#a8a8a8"/><line x1="55" y1="596.5" x2="57" y2="596.5" stroke="#a8a8a8"/><line x1="55" y1="600.5" x2="57" y2="600.5" stroke="#a8a8a8"/><line x1="52" y1="604.5" x2="57" y2="604.5" stroke="#a8a8a8"/><line x1="55" y1="607.5" x2="57" y2="607.5" stroke="#a8a8a8"/><line x1="55" y1="611.5" x2="57" y2="611.5" stroke="#a8a8a8"/><line x1="55" y1="615.5" x2="57" y2="615.5" stroke="#a8a8a8"/><line x1="55" y1="619.5" x2="57" y2="619.5" stroke="#a8a8a8"/><line x1="42" y1="623.5" x2="57" y2="623.5" stroke="#a8a8a8"/><line x1="55" y1="626.5" x2="57" y2="626.5" stroke="#a8a8a8"/><line x1="55" y1="630.5" x2="57" y2="630.5" stroke="#a8a8a8"/><line x1="55" y1="634.5" x2="57" y2="634.5" stroke="#a8a8a8"/><line x1="55" y1="638.5" x2="57" y2="638.5" stroke="#a8a8a8"/><line x1="52" y1="642.5" x2="57" y2="642.5" stroke="#a8a8a8"/><line x1="55" y1="645.5" x2="57" y2="645.5" stroke="#a8a8a8"/><line x1="55" y1="649.5" x2="57" y2="649.5" stroke="#a8a8a8"/><line x1="55" y1="653.5" x2="57" y2="653.5" stroke="#a8a8a8"/><line x1="55" y1="657.5" x2="57" y2="657.5" stroke="#a8a8a8"/><line x1="52" y1="661.5" x2="57" y2="661.5" stroke="#a8a8a8"/><line x1="55" y1="664.5" x2="57" y2="664.5" stroke="#a8a8a8"/><line x1="55" y1="668.5" x2="57" y2="668.5" stroke="#a8a8a8"/><line x1="55" y1="672.5" x2="57" y2="672.5" stroke="#a8a8a8"/><line x1="55" y1="676.5" x2="57" y2="676.5" stroke="#a8a8a8"/><line x1="52" y1="679.5" x2="57" y2="679.5" stroke="#a8a8a8"/><line x1="55" y1="683.5" x2="57" y2="683.5" stroke="#a8a8a8"/><line x1="55" y1="687.5" x2="57" y2="687.5" stroke="#a8a8a8"/><line x1="55" y1="691.5" x2="57" y2="691.5" stroke="#a8a8a8"/><line x1="55" y1="695.5" x2="57" y2="695.5" stroke="#a8a8a8"/><line x1="52" y1="698.5" x2="57" y2="698.5" stroke="#a8a8a8"/><line x1="55" y1="702.5" x2="57" y2="702.5" stroke="#a8a8a8"/><line x1="55" y1="706.5" x2="57" y2="706.5" stroke="#a8a8a8"/><path d="M1120.5 120V135" stroke="#f0f0f0" stroke-dasharray="1 1" fill="none"/><path d="M43 250.5H57" stroke="#f0f0f0" stroke-dasharray="1 1" fill="none"/><path d="M1162.5 122V128" stroke="#2f6fe0" fill="none"/><path d="M43.5 124.5H56M46.5 121V134" stroke="#bbb" stroke-dasharray="1 1" fill="none"/><rect x="45.5" y="123.5" width="2" height="2" fill="#1f1f1f" stroke="#ccc" stroke-width="0.8"/></svg>
<span class="t" style="left:118.0px;top:120.4px;font-size:9px;line-height:11px;color:#ffffff;-webkit-text-stroke:0.25px #fff;">50</span>
<span class="t" style="left:213.0px;top:120.4px;font-size:9px;line-height:11px;color:#ffffff;-webkit-text-stroke:0.25px #fff;">0</span>
<span class="t" style="left:307.0px;top:120.4px;font-size:9px;line-height:11px;color:#ffffff;-webkit-text-stroke:0.25px #fff;">50</span>
<span class="t" style="left:402.0px;top:120.4px;font-size:9px;line-height:11px;color:#ffffff;-webkit-text-stroke:0.25px #fff;">100</span>
<span class="t" style="left:497.0px;top:120.4px;font-size:9px;line-height:11px;color:#ffffff;-webkit-text-stroke:0.25px #fff;">150</span>
<span class="t" style="left:592.0px;top:120.4px;font-size:9px;line-height:11px;color:#ffffff;-webkit-text-stroke:0.25px #fff;">200</span>
<span class="t" style="left:687.0px;top:120.4px;font-size:9px;line-height:11px;color:#ffffff;-webkit-text-stroke:0.25px #fff;">250</span>
<span class="t" style="left:782.0px;top:120.4px;font-size:9px;line-height:11px;color:#ffffff;-webkit-text-stroke:0.25px #fff;">300</span>
<span class="t" style="left:876.0px;top:120.4px;font-size:9px;line-height:11px;color:#ffffff;-webkit-text-stroke:0.25px #fff;">350</span>
<span class="t" style="left:971.0px;top:120.4px;font-size:9px;line-height:11px;color:#ffffff;-webkit-text-stroke:0.25px #fff;">400</span>
<span class="t" style="left:1066.0px;top:120.4px;font-size:9px;line-height:11px;color:#ffffff;-webkit-text-stroke:0.25px #fff;">450</span>
<span class="t" style="left:43.7px;top:149.2px;font-size:9px;line-height:11px;color:#ffffff;-webkit-text-stroke:0.25px #fff;">0</span>
<span class="t" style="left:43.7px;top:244.2px;font-size:9px;line-height:11px;color:#ffffff;-webkit-text-stroke:0.25px #fff;">5</span>
<span class="t" style="left:43.7px;top:253.4px;font-size:9px;line-height:11px;color:#ffffff;-webkit-text-stroke:0.25px #fff;">0</span>
<span class="t" style="left:43.7px;top:339.2px;font-size:9px;line-height:11px;color:#ffffff;-webkit-text-stroke:0.25px #fff;">1</span>
<span class="t" style="left:43.7px;top:348.4px;font-size:9px;line-height:11px;color:#ffffff;-webkit-text-stroke:0.25px #fff;">0</span>
<span class="t" style="left:43.7px;top:357.6px;font-size:9px;line-height:11px;color:#ffffff;-webkit-text-stroke:0.25px #fff;">0</span>
<span class="t" style="left:43.7px;top:434.2px;font-size:9px;line-height:11px;color:#ffffff;-webkit-text-stroke:0.25px #fff;">1</span>
<span class="t" style="left:43.7px;top:443.4px;font-size:9px;line-height:11px;color:#ffffff;-webkit-text-stroke:0.25px #fff;">5</span>
<span class="t" style="left:43.7px;top:452.6px;font-size:9px;line-height:11px;color:#ffffff;-webkit-text-stroke:0.25px #fff;">0</span>
<span class="t" style="left:43.7px;top:529.2px;font-size:9px;line-height:11px;color:#ffffff;-webkit-text-stroke:0.25px #fff;">2</span>
<span class="t" style="left:43.7px;top:538.4px;font-size:9px;line-height:11px;color:#ffffff;-webkit-text-stroke:0.25px #fff;">0</span>
<span class="t" style="left:43.7px;top:547.6px;font-size:9px;line-height:11px;color:#ffffff;-webkit-text-stroke:0.25px #fff;">0</span>
<span class="t" style="left:43.7px;top:624.2px;font-size:9px;line-height:11px;color:#ffffff;-webkit-text-stroke:0.25px #fff;">2</span>
<span class="t" style="left:43.7px;top:633.4px;font-size:9px;line-height:11px;color:#ffffff;-webkit-text-stroke:0.25px #fff;">5</span>
<span class="t" style="left:43.7px;top:642.6px;font-size:9px;line-height:11px;color:#ffffff;-webkit-text-stroke:0.25px #fff;">0</span>
<!-- menubar -->
<div class="b" style="left:0px;top:0px;width:1366px;height:30px;background:#535353;"></div>
<div class="b" style="left:0px;top:30px;width:1366px;height:1px;background:#3b3b3b;"></div>
<span class="t" style="left:8.6px;top:1.4px;font-size:21px;line-height:25px;color:#b5477b;letter-spacing:0.74px;-webkit-text-stroke:0.5px #b5477b;">Id</span>
<span class="t" style="left:47.0px;top:6.5px;font-size:13px;line-height:16px;color:#e4e4e4;letter-spacing:-0.74px;">File</span>
<span class="t" style="left:82.0px;top:6.5px;font-size:13px;line-height:16px;color:#e4e4e4;letter-spacing:-0.60px;">Edit</span>
<span class="t" style="left:119.0px;top:6.5px;font-size:13px;line-height:16px;color:#e4e4e4;letter-spacing:-0.51px;">Layout</span>
<span class="t" style="left:172.0px;top:6.5px;font-size:13px;line-height:16px;color:#e4e4e4;letter-spacing:-0.80px;">Type</span>
<span class="t" style="left:215.0px;top:6.5px;font-size:13px;line-height:16px;color:#e4e4e4;letter-spacing:-0.43px;">Object</span>
<span class="t" style="left:267.0px;top:6.5px;font-size:13px;line-height:16px;color:#e4e4e4;letter-spacing:-0.62px;">Table</span>
<span class="t" style="left:313.0px;top:6.5px;font-size:13px;line-height:16px;color:#e4e4e4;letter-spacing:-0.99px;">View</span>
<span class="t" style="left:356.0px;top:6.5px;font-size:13px;line-height:16px;color:#e4e4e4;letter-spacing:-0.37px;">Window</span>
<span class="t" style="left:417.0px;top:6.5px;font-size:13px;line-height:16px;color:#e4e4e4;letter-spacing:-0.43px;">Help</span>
<div class="b" style="left:456px;top:5px;width:1px;height:20px;background:#404040;"></div>
<div class="b" style="left:472px;top:7px;width:16px;height:16px;background:#b2b2b2;"></div>
<span class="t" style="left:474.3px;top:8.3px;font-size:11.5px;line-height:14px;color:#505050;letter-spacing:0.00px;">Br</span>
<div class="b" style="left:508px;top:7px;width:16px;height:16px;background:#b2b2b2;"></div>
<span class="t" style="left:510.8px;top:8.3px;font-size:11.5px;line-height:14px;color:#505050;letter-spacing:-0.18px;">St</span>
<span class="t" style="left:541.0px;top:7.5px;font-size:13px;line-height:16px;color:#f0f0f0;letter-spacing:-0.27px;">50.3%</span>
<svg class="b" style="left:599.5px;top:12.8px;" width="8" height="4.5" viewBox="0 0 8 4.5"><path d="M0.5 0.5L4.0 4.0L7.5 0.5" fill="none" stroke="#d6d6d6" stroke-width="1.15"/></svg>
<div class="b" style="left:619px;top:5px;width:1px;height:20px;background:#404040;"></div>
<svg class="b" style="left:629px;top:8px;" width="19" height="15" viewBox="0 0 19 15"><rect x="3" y="5" width="15" height="9" fill="#c8c8c8"/><path d="M1.5 6V14" stroke="#c8c8c8" stroke-dasharray="2 1.5" fill="none"/><path d="M4 1.5V4M8 1.5V4M12 1.5V4M16 1.5V4" stroke="#c8c8c8" stroke-width="1" fill="none"/></svg>
<svg class="b" style="left:656px;top:12.8px;" width="8" height="4.5" viewBox="0 0 8 4.5"><path d="M0.5 0.5L4.0 4.0L7.5 0.5" fill="none" stroke="#d6d6d6" stroke-width="1.15"/></svg>
<svg class="b" style="left:679px;top:7.4px;" width="16" height="15" viewBox="0 0 16 15"><rect x="2.6" y="2.6" width="10.8" height="9.6" fill="#c8c8c8"/><path d="M3.6 0.5H0.5V3.6M12.4 0.5H15.5V3.6M15.5 11.2V14.3H12.4M3.6 14.3H0.5V11.2" fill="none" stroke="#c8c8c8" stroke-width="1"/></svg>
<svg class="b" style="left:704px;top:12.8px;" width="8" height="4.5" viewBox="0 0 8 4.5"><path d="M0.5 0.5L4.0 4.0L7.5 0.5" fill="none" stroke="#d6d6d6" stroke-width="1.15"/></svg>
<svg class="b" style="left:726px;top:9px;" width="17" height="11" viewBox="0 0 17 11"><rect x="0" y="0" width="8" height="11" fill="#c8c8c8"/><rect x="10" y="0" width="7" height="4.5" fill="#c8c8c8"/><rect x="10" y="6.5" width="7" height="4.5" fill="#c8c8c8"/></svg>
<svg class="b" style="left:752px;top:12.8px;" width="8" height="4.5" viewBox="0 0 8 4.5"><path d="M0.5 0.5L4.0 4.0L7.5 0.5" fill="none" stroke="#d6d6d6" stroke-width="1.15"/></svg>
<div class="b" style="left:891px;top:3px;width:112px;height:25px;border:1px solid #c4c4c4;border-radius:13px;"></div>
<svg class="b" style="left:901px;top:9px;" width="13" height="12" viewBox="0 0 13 12"><path d="M3.5 5.5H1.5V11.5H11.5V5.5H9.5" fill="none" stroke="#e0e0e0" stroke-width="1.2"/><path d="M6.5 8.5V2" stroke="#e0e0e0" stroke-width="1.3" fill="none"/><path d="M3.8 3.6L6.5 0.6L9.2 3.6Z" fill="#e0e0e0"/></svg>
<span class="t" style="left:921.0px;top:7.0px;font-size:13px;line-height:16px;color:#f0f0f0;letter-spacing:-0.92px;">Publish Online</span>
<div class="b" style="left:1011px;top:5px;width:1px;height:20px;background:#404040;"></div>
<span class="t" style="left:1024.0px;top:6.0px;font-size:13px;line-height:16px;color:#e4e4e4;letter-spacing:-0.87px;">Essentials</span>
<svg class="b" style="left:1084px;top:13px;" width="8" height="5" viewBox="0 0 8 5"><path d="M0.5 0.5L4.0 4.5L7.5 0.5" fill="none" stroke="#e0e0e0" stroke-width="1.8"/></svg>
<div class="b" style="left:1104px;top:5px;width:1px;height:20px;background:#404040;"></div>
<div class="b" style="left:1114px;top:4px;width:130px;height:20px;background:#454545;border:1px solid #646464;border-radius:3px;"></div>
<svg class="b" style="left:1118px;top:7px;" width="18" height="13" viewBox="0 0 18 13"><circle cx="9" cy="5" r="3.8" fill="none" stroke="#c8c8c8" stroke-width="1.3"/><path d="M6.2 7.8L1.2 12" stroke="#c8c8c8" stroke-width="1.8" fill="none"/><path d="M12 9.5H17L14.5 12Z" fill="#c8c8c8"/></svg>
<span class="t" style="left:1141.0px;top:6.8px;font-size:12px;line-height:14px;color:#8c8c8c;letter-spacing:-1.00px;">Adobe Stock</span>
<div class="b" style="left:1260px;top:-1px;width:110px;height:19px;border:1px solid #646464;border-radius:0 0 0 4px;"></div>
<div class="b" style="left:1288px;top:0px;width:1px;height:18px;background:#646464;"></div>
<div class="b" style="left:1314px;top:0px;width:1px;height:18px;background:#646464;"></div>
<div class="b" style="left:1269px;top:11px;width:10px;height:2.5px;background:#c8c8c8;"></div>
<svg class="b" style="left:1296px;top:4px;" width="12" height="11" viewBox="0 0 12 11"><path d="M3.5 3V0.8H11.2V7H9" fill="none" stroke="#c8c8c8" stroke-width="1.5"/><rect x="0.8" y="3.8" width="7.6" height="6" fill="none" stroke="#c8c8c8" stroke-width="1.5"/></svg>
<svg class="b" style="left:1333px;top:5px;" width="11" height="9" viewBox="0 0 11 9"><path d="M1 0.8L10 8.2M10 0.8L1 8.2" stroke="#c8c8c8" stroke-width="2" fill="none"/></svg>
<!-- control -->
<div class="b" style="left:0px;top:31px;width:1366px;height:59px;background:#535353;"></div>
<div class="b" style="left:0px;top:90px;width:1366px;height:1px;background:#3b3b3b;"></div>
<div class="b" style="left:0px;top:31px;width:1px;height:59px;background:#484848;"></div>
<svg class="b" style="left:5px;top:51px;" width="4" height="19" viewBox="0 0 4 19"><path d="M2 0V19" stroke="#3c3c3c" stroke-width="3.4" stroke-dasharray="1 1.5" fill="none"/></svg>
<svg class="b" style="left:28px;top:48px;" width="25" height="25" viewBox="0 0 25 25"><rect x="0.5" y="0.5" width="6" height="6" fill="#f8f8f8" stroke="#dadada" stroke-width="1"/><rect x="9.5" y="0.5" width="6" height="6" fill="none" stroke="#dadada" stroke-width="1"/><rect x="18.5" y="0.5" width="6" height="6" fill="none" stroke="#dadada" stroke-width="1"/><rect x="0.5" y="9.5" width="6" height="6" fill="none" stroke="#dadada" stroke-width="1"/><rect x="9.5" y="9.5" width="6" height="6" fill="none" stroke="#dadada" stroke-width="1"/><rect x="18.5" y="9.5" width="6" height="6" fill="none" stroke="#dadada" stroke-width="1"/><rect x="0.5" y="18.5" width="6" height="6" fill="none" stroke="#dadada" stroke-width="1"/><rect x="9.5" y="18.5" width="6" height="6" fill="none" stroke="#dadada" stroke-width="1"/><rect x="18.5" y="18.5" width="6" height="6" fill="none" stroke="#dadada" stroke-width="1"/><path d="M7 3.5H9M16 3.5H18M3.5 7V9M3.5 16V18" stroke="#dadada" stroke-width="1" fill="none"/><path d="M7 12.5H9M16 12.5H18M12.5 7V9M12.5 16V18" stroke="#dadada" stroke-width="1" fill="none"/><path d="M7 21.5H9M16 21.5H18M21.5 7V9M21.5 16V18" stroke="#dadada" stroke-width="1" fill="none"/></svg>
<span class="t" style="left:64.0px;top:41.7px;font-size:10px;line-height:12px;color:#e2e2e2;font-weight:700;letter-spacing:-0.50px;">X:</span>
<span class="t" style="left:64.0px;top:67.5px;font-size:10px;line-height:12px;color:#e2e2e2;font-weight:700;letter-spacing:-0.13px;">Y:</span>
<div class="b" style="left:78px;top:37px;width:86.5px;height:20.5px;background:#5f5f5f;border-radius:3px;"></div>
<div class="b" style="left:78px;top:63px;width:86.5px;height:20.5px;background:#5f5f5f;border-radius:3px;"></div>
<svg class="b" style="left:82.5px;top:41px;" width="8" height="4" viewBox="0 0 8 4"><path d="M0.5 3.7L4 0.6L7.5 3.7" fill="none" stroke="#c0c0c0" stroke-width="1.1"/></svg><svg class="b" style="left:82.5px;top:50.5px;" width="8" height="4" viewBox="0 0 8 4"><path d="M0.5 0.3L4 3.4L7.5 0.3" fill="none" stroke="#c0c0c0" stroke-width="1.1"/></svg>
<svg class="b" style="left:82.5px;top:67px;" width="8" height="4" viewBox="0 0 8 4"><path d="M0.5 3.7L4 0.6L7.5 3.7" fill="none" stroke="#c0c0c0" stroke-width="1.1"/></svg><svg class="b" style="left:82.5px;top:76.5px;" width="8" height="4" viewBox="0 0 8 4"><path d="M0.5 0.3L4 3.4L7.5 0.3" fill="none" stroke="#c0c0c0" stroke-width="1.1"/></svg>
<span class="t" style="left:177.3px;top:41.7px;font-size:10px;line-height:12px;color:#e2e2e2;font-weight:700;letter-spacing:-0.44px;">W:</span>
<span class="t" style="left:178.2px;top:67.5px;font-size:10px;line-height:12px;color:#e2e2e2;font-weight:700;letter-spacing:-0.28px;">H:</span>
<div class="b" style="left:191px;top:37px;width:87px;height:20.5px;background:#5f5f5f;border-radius:3px;"></div>
<div class="b" style="left:191px;top:63px;width:87px;height:20.5px;background:#5f5f5f;border-radius:3px;"></div>
<svg class="b" style="left:195px;top:41px;" width="8" height="4" viewBox="0 0 8 4"><path d="M0.5 3.7L4 0.6L7.5 3.7" fill="none" stroke="#c0c0c0" stroke-width="1.1"/></svg><svg class="b" style="left:195px;top:50.5px;" width="8" height="4" viewBox="0 0 8 4"><path d="M0.5 0.3L4 3.4L7.5 0.3" fill="none" stroke="#c0c0c0" stroke-width="1.1"/></svg>
<svg class="b" style="left:195px;top:67px;" width="8" height="4" viewBox="0 0 8 4"><path d="M0.5 3.7L4 0.6L7.5 3.7" fill="none" stroke="#c0c0c0" stroke-width="1.1"/></svg><svg class="b" style="left:195px;top:76.5px;" width="8" height="4" viewBox="0 0 8 4"><path d="M0.5 0.3L4 3.4L7.5 0.3" fill="none" stroke="#c0c0c0" stroke-width="1.1"/></svg>
<svg class="b" style="left:288px;top:51px;" width="14" height="16" viewBox="0 0 14 16"><rect x="4" y="1.6" width="6.2" height="12.8" rx="3.1" fill="none" stroke="#cacaca" stroke-width="1.7"/><path d="M7.1 5V11" stroke="#535353" stroke-width="3.4"/><path d="M0.8 1.6L13 14.2" stroke="#535353" stroke-width="3.2"/><path d="M0.8 1.6L13 14.2" stroke="#cacaca" stroke-width="1.4"/></svg>
<div class="b" style="left:311.5px;top:36.5px;width:1px;height:47px;background:#484848;"></div>
<svg class="b" style="left:320px;top:41px;" width="15" height="14" viewBox="0 0 15 14"><path d="M14.5 1V13.5H0.5" fill="none" stroke="#d8d8d8" stroke-width="1" stroke-dasharray="1 1"/><path d="M0.5 14V0.5H14.5" fill="none" stroke="#e0e0e0" stroke-width="1"/><path d="M2.5 7H9" stroke="#ececec" stroke-width="1.6"/><path d="M8 3.6L12.4 7L8 10.4Z" fill="#ececec"/></svg>
<svg class="b" style="left:320px;top:67px;" width="15" height="14" viewBox="0 0 15 14"><path d="M14.5 1V13.5H0.5" fill="none" stroke="#d8d8d8" stroke-width="1" stroke-dasharray="1 1"/><path d="M0.5 14V0.5H14.5" fill="none" stroke="#e0e0e0" stroke-width="1"/><path d="M7.5 2.5V9" stroke="#ececec" stroke-width="1.6"/><path d="M4.1 8L7.5 12.4L10.9 8Z" fill="#ececec"/></svg>
<div class="b" style="left:339px;top:37px;width:87px;height:20.5px;background:#5f5f5f;border-radius:3px;"></div>
<div class="b" style="left:339px;top:63px;width:87px;height:20.5px;background:#5f5f5f;border-radius:3px;"></div>
<svg class="b" style="left:343px;top:41px;" width="8" height="4" viewBox="0 0 8 4"><path d="M0.5 3.7L4 0.6L7.5 3.7" fill="none" stroke="#c0c0c0" stroke-width="1.1"/></svg><svg class="b" style="left:343px;top:50.5px;" width="8" height="4" viewBox="0 0 8 4"><path d="M0.5 0.3L4 3.4L7.5 0.3" fill="none" stroke="#c0c0c0" stroke-width="1.1"/></svg>
<svg class="b" style="left:343px;top:67px;" width="8" height="4" viewBox="0 0 8 4"><path d="M0.5 3.7L4 0.6L7.5 3.7" fill="none" stroke="#c0c0c0" stroke-width="1.1"/></svg><svg class="b" style="left:343px;top:76.5px;" width="8" height="4" viewBox="0 0 8 4"><path d="M0.5 0.3L4 3.4L7.5 0.3" fill="none" stroke="#c0c0c0" stroke-width="1.1"/></svg>
<svg class="b" style="left:412.5px;top:45.5px;" width="8" height="4.5" viewBox="0 0 8 4.5"><path d="M0.5 0.5L4.0 4.0L7.5 0.5" fill="none" stroke="#c8c8c8" stroke-width="1.2"/></svg>
<svg class="b" style="left:412.5px;top:71.5px;" width="8" height="4.5" viewBox="0 0 8 4.5"><path d="M0.5 0.5L4.0 4.0L7.5 0.5" fill="none" stroke="#c8c8c8" stroke-width="1.2"/></svg>
<div class="b" style="left:432px;top:48.5px;width:22px;height:22.5px;background:#2b2b2b;border-radius:4px;"></div>
<svg class="b" style="left:439px;top:52px;" width="8" height="15" viewBox="0 0 8 15"><rect x="1.3" y="1" width="5.4" height="7.6" rx="2.7" fill="none" stroke="#d0d0d0" stroke-width="1.6"/><rect x="1.3" y="6.4" width="5.4" height="7.6" rx="2.7" fill="none" stroke="#d0d0d0" stroke-width="1.6"/><path d="M4 5V10" stroke="#2b2b2b" stroke-width="1.4"/><path d="M4 4.6V10.4" stroke="#d0d0d0" stroke-width="0" /><path d="M1.3 7.5H2.2M5.8 7.5H6.7" stroke="#2b2b2b" stroke-width="1.2"/></svg>
<svg class="b" style="left:463.5px;top:42.5px;" width="12" height="10" viewBox="0 0 12 10"><path d="M0.8 9.3H11.2L8.6 1Z" fill="none" stroke="#d8d8d8" stroke-width="1.2" stroke-linejoin="miter"/><path d="M5.6 9.2A4.5 4.5 0 0 0 4.2 5.8" fill="none" stroke="#d8d8d8" stroke-width="1"/></svg>
<svg class="b" style="left:463.5px;top:69.5px;" width="12" height="10" viewBox="0 0 12 10"><path d="M3.4 0.4H11.8L8.4 9.2H0.2Z" fill="#d0d0d0"/></svg>
<div class="b" style="left:481px;top:37px;width:86.5px;height:20.5px;background:#5f5f5f;border-radius:3px;"></div>
<div class="b" style="left:481px;top:63px;width:86.5px;height:20.5px;background:#5f5f5f;border-radius:3px;"></div>
<svg class="b" style="left:485px;top:41px;" width="8" height="4" viewBox="0 0 8 4"><path d="M0.5 3.7L4 0.6L7.5 3.7" fill="none" stroke="#c0c0c0" stroke-width="1.1"/></svg><svg class="b" style="left:485px;top:50.5px;" width="8" height="4" viewBox="0 0 8 4"><path d="M0.5 0.3L4 3.4L7.5 0.3" fill="none" stroke="#c0c0c0" stroke-width="1.1"/></svg>
<svg class="b" style="left:485px;top:67px;" width="8" height="4" viewBox="0 0 8 4"><path d="M0.5 3.7L4 0.6L7.5 3.7" fill="none" stroke="#c0c0c0" stroke-width="1.1"/></svg><svg class="b" style="left:485px;top:76.5px;" width="8" height="4" viewBox="0 0 8 4"><path d="M0.5 0.3L4 3.4L7.5 0.3" fill="none" stroke="#c0c0c0" stroke-width="1.1"/></svg>
<svg class="b" style="left:554px;top:45.5px;" width="8" height="4.5" viewBox="0 0 8 4.5"><path d="M0.5 0.5L4.0 4.0L7.5 0.5" fill="none" stroke="#c8c8c8" stroke-width="1.2"/></svg>
<svg class="b" style="left:554px;top:71.5px;" width="8" height="4.5" viewBox="0 0 8 4.5"><path d="M0.5 0.5L4.0 4.0L7.5 0.5" fill="none" stroke="#c8c8c8" stroke-width="1.2"/></svg>
<div class="b" style="left:573px;top:36.5px;width:1px;height:47px;background:#484848;"></div>
<svg class="b" style="left:582px;top:38.5px;" width="18" height="17" viewBox="0 0 18 17"><path d="M13.2 3.4A7 7 0 0 0 1.5 8.6" fill="none" stroke="#7d7d7d" stroke-width="1.7"/><path d="M1.5 8.6A7 7 0 0 0 15.5 8.6" fill="none" stroke="#7d7d7d" stroke-width="1.5" stroke-dasharray="1.1 1.3"/><path d="M11.4 6.2L17 6.4L16.6 0.4Z" fill="#7d7d7d"/></svg>
<svg class="b" style="left:609px;top:38.5px;" width="18" height="17" viewBox="0 0 18 17"><g transform="matrix(-1 0 0 1 18 0)"><path d="M13.2 3.4A7 7 0 0 0 1.5 8.6" fill="none" stroke="#7d7d7d" stroke-width="1.7"/><path d="M1.5 8.6A7 7 0 0 0 15.5 8.6" fill="none" stroke="#7d7d7d" stroke-width="1.5" stroke-dasharray="1.1 1.3"/><path d="M11.4 6.2L17 6.4L16.6 0.4Z" fill="#7d7d7d"/></g></svg>
<svg class="b" style="left:581.5px;top:66px;" width="18" height="15" viewBox="0 0 18 15"><path d="M0.8 1.6V13.2L6.2 7.4Z" fill="none" stroke="#7d7d7d" stroke-width="1.1"/><path d="M17.2 1.2V13.6L11.4 7.4Z" fill="#7d7d7d"/><path d="M9 0V15" stroke="#7d7d7d" stroke-dasharray="1 1"/></svg>
<svg class="b" style="left:610px;top:64.5px;" width="16" height="18" viewBox="0 0 16 18"><path d="M3 1H13.6L8.3 6.4Z" fill="none" stroke="#7d7d7d" stroke-width="1.1"/><path d="M2 17.4H14.6L8.3 11.3Z" fill="#7d7d7d"/><path d="M0 9H15.5" stroke="#7d7d7d" stroke-dasharray="1 1"/></svg>
<svg class="b" style="left:637.5px;top:47.5px;" width="26" height="26" viewBox="0 0 26 26"><path d="M0.5 4V0.5H4M22 0.5H25.5V4M25.5 22V25.5H22M4 25.5H0.5V22" fill="none" stroke="#7d7d7d" stroke-width="1"/></svg>
<span class="t sf" style="left:643.5px;top:46.2px;font-size:22px;line-height:26px;color:#7d7d7d;letter-spacing:0.76px;">P</span>
<div class="b" style="left:670px;top:36.5px;width:1px;height:47px;background:#484848;"></div>
<svg class="b" style="left:683.5px;top:39px;" width="9" height="4" viewBox="0 0 9 4"><path d="M4.2 0L8.4 3.6H0Z" fill="#7d7d7d"/></svg>
<svg class="b" style="left:681.2px;top:45px;" width="13" height="10" viewBox="0 0 13 10"><rect x="5" y="0.5" width="2.6" height="3.6" fill="none" stroke="#7d7d7d" stroke-width="1"/><path d="M6.3 4.2V6.4M1.4 7.4V6.4H11.2V7.4M6.3 6.4V7.4" fill="none" stroke="#7d7d7d" stroke-width="1"/><rect x="0.3" y="7.4" width="2.3" height="2.2" fill="none" stroke="#7d7d7d" stroke-width="1"/><rect x="5.1" y="7.4" width="2.3" height="2.2" fill="none" stroke="#7d7d7d" stroke-width="1"/><rect x="9.9" y="7.4" width="2.3" height="2.2" fill="none" stroke="#7d7d7d" stroke-width="1"/></svg>
<svg class="b" style="left:681.2px;top:66.3px;" width="13" height="10" viewBox="0 0 13 10"><rect x="5" y="0.5" width="2.6" height="3.6" fill="none" stroke="#7d7d7d" stroke-width="1"/><path d="M6.3 4.2V6.4M1.4 7.4V6.4H11.2V7.4M6.3 6.4V7.4" fill="none" stroke="#7d7d7d" stroke-width="1"/><rect x="0.3" y="7.4" width="2.3" height="2.2" fill="none" stroke="#7d7d7d" stroke-width="1"/><rect x="5.1" y="7.4" width="2.3" height="2.2" fill="none" stroke="#7d7d7d" stroke-width="1"/><rect x="9.9" y="7.4" width="2.3" height="2.2" fill="none" stroke="#7d7d7d" stroke-width="1"/></svg>
<svg class="b" style="left:683.5px;top:78px;" width="9" height="4" viewBox="0 0 9 4"><path d="M4.2 4L8.4 0.4H0Z" fill="#7d7d7d"/></svg>
<svg class="b" style="left:705.5px;top:44.5px;" width="4" height="7" viewBox="0 0 4 7"><path d="M0 3.4L3.8 0V6.8Z" fill="#cdcdcd"/></svg>
<svg class="b" style="left:711.5px;top:42.4px;" width="13" height="10" viewBox="0 0 13 10"><rect x="5" y="0.5" width="2.6" height="3.6" fill="none" stroke="#cdcdcd" stroke-width="1"/><path d="M6.3 4.2V6.4M1.4 7.4V6.4H11.2V7.4M6.3 6.4V7.4" fill="none" stroke="#cdcdcd" stroke-width="1"/><rect x="0.3" y="7.4" width="2.3" height="2.2" fill="none" stroke="#cdcdcd" stroke-width="1"/><rect x="5.1" y="7.4" width="2.3" height="2.2" fill="none" stroke="#cdcdcd" stroke-width="1"/><rect x="9.9" y="7.4" width="2.3" height="2.2" fill="none" stroke="#cdcdcd" stroke-width="1"/></svg>
<svg class="b" style="left:706px;top:69.2px;" width="13" height="10" viewBox="0 0 13 10"><rect x="5" y="0.5" width="2.6" height="3.6" fill="none" stroke="#cdcdcd" stroke-width="1"/><path d="M6.3 4.2V6.4M1.4 7.4V6.4H11.2V7.4M6.3 6.4V7.4" fill="none" stroke="#cdcdcd" stroke-width="1"/><rect x="0.3" y="7.4" width="2.3" height="2.2" fill="none" stroke="#cdcdcd" stroke-width="1"/><rect x="5.1" y="7.4" width="2.3" height="2.2" fill="none" stroke="#cdcdcd" stroke-width="1"/><rect x="9.9" y="7.4" width="2.3" height="2.2" fill="none" stroke="#cdcdcd" stroke-width="1"/></svg>
<svg class="b" style="left:720px;top:71px;" width="4" height="7" viewBox="0 0 4 7"><path d="M4 3.4L0.2 0V6.8Z" fill="#cdcdcd"/></svg>
<div class="b" style="left:732px;top:36.5px;width:1px;height:47px;background:#484848;"></div>
<svg class="b" style="left:738.5px;top:37.5px;" width="20" height="20" viewBox="0 0 20 20"><rect x="0" y="0" width="20" height="20" fill="#fff"/><path d="M0.3 19.7L19.7 0.3" stroke="#ee1c24" stroke-width="1.8"/></svg>
<div class="b" style="left:762px;top:37px;width:17px;height:20.5px;background:#4b4b4b;border:1px solid #6a6a6a;border-radius:3px;"></div>
<svg class="b" style="left:768px;top:43px;" width="5" height="9" viewBox="0 0 5 9"><path d="M0.6 0.6L4.3 4.5L0.6 8.4" fill="none" stroke="#d2d2d2" stroke-width="1.2"/></svg>
<svg class="b" style="left:738.5px;top:63.5px;" width="20" height="20" viewBox="0 0 20 20"><rect x="0" y="0" width="20" height="20" fill="#000"/><rect x="5.5" y="5.5" width="9" height="9" fill="#4a4a4a"/></svg>
<div class="b" style="left:762px;top:63px;width:17px;height:20.5px;background:#4b4b4b;border:1px solid #6a6a6a;border-radius:3px;"></div>
<svg class="b" style="left:768px;top:69px;" width="5" height="9" viewBox="0 0 5 9"><path d="M0.6 0.6L4.3 4.5L0.6 8.4" fill="none" stroke="#d2d2d2" stroke-width="1.2"/></svg>
<div class="b" style="left:784px;top:36.5px;width:1px;height:47px;background:#484848;"></div>
<div class="b" style="left:790px;top:37px;width:87px;height:20.5px;background:#474747;border:1px solid #6a6a6a;border-radius:3px;"></div>
<div class="b" style="left:791px;top:38px;width:15px;height:18.5px;background:#505050;border-radius:2px 0 0 2px;"></div>
<div class="b" style="left:858.5px;top:38px;width:17.5px;height:18.5px;background:#4e4e4e;border-radius:0 2px 2px 0;"></div>
<div class="b" style="left:806px;top:37px;width:1px;height:20.5px;background:#6a6a6a;"></div>
<div class="b" style="left:857.5px;top:37px;width:1px;height:20.5px;background:#6a6a6a;"></div>
<svg class="b" style="left:794px;top:41px;" width="8" height="4" viewBox="0 0 8 4"><path d="M0.5 3.7L4 0.6L7.5 3.7" fill="none" stroke="#d0d0d0" stroke-width="1.1"/></svg><svg class="b" style="left:794px;top:50.5px;" width="8" height="4" viewBox="0 0 8 4"><path d="M0.5 0.3L4 3.4L7.5 0.3" fill="none" stroke="#d0d0d0" stroke-width="1.1"/></svg>
<span class="t" style="left:811.0px;top:40.5px;font-size:11.5px;line-height:14px;color:#f0f0f0;letter-spacing:-0.42px;">1 pt</span>
<svg class="b" style="left:863.5px;top:45.5px;" width="8" height="4.5" viewBox="0 0 8 4.5"><path d="M0.5 0.5L4.0 4.0L7.5 0.5" fill="none" stroke="#d2d2d2" stroke-width="1.2"/></svg>
<div class="b" style="left:790px;top:63px;width:87px;height:20.5px;background:#474747;border:1px solid #6a6a6a;border-radius:3px;"></div>
<div class="b" style="left:791px;top:64px;width:67px;height:18.5px;background:#e4e4e4;border-radius:2px 0 0 2px;"></div>
<div class="b" style="left:795px;top:69.5px;width:60px;height:8.5px;background:#000;"></div>
<div class="b" style="left:858.5px;top:64px;width:17.5px;height:18.5px;background:#4e4e4e;border-radius:0 2px 2px 0;"></div>
<svg class="b" style="left:863.5px;top:71.5px;" width="8" height="4.5" viewBox="0 0 8 4.5"><path d="M0.5 0.5L4.0 4.0L7.5 0.5" fill="none" stroke="#d2d2d2" stroke-width="1.2"/></svg>
<div class="b" style="left:882px;top:36.5px;width:1px;height:47px;background:#484848;"></div>
<svg class="b" style="left:892.5px;top:41px;" width="16" height="13" viewBox="0 0 16 13"><rect x="0.7" y="0.7" width="10.3" height="10.3" fill="none" stroke="#d4d4d4" stroke-width="1.2"/><path d="M1 1H3.4A2.4 2.4 0 0 1 1 3.4ZM10.7 1V3.4A2.4 2.4 0 0 1 8.3 1ZM10.7 10.7H8.3A2.4 2.4 0 0 1 10.7 8.3ZM1 10.7V8.3A2.4 2.4 0 0 1 3.4 10.7Z" fill="#bdbdbd"/><path d="M12.6 10.4H15.6L14.1 12.4Z" fill="#d0d0d0"/></svg>
<svg class="b" style="left:921.5px;top:40.5px;" width="15" height="16" viewBox="0 0 15 16"><defs><linearGradient id="ds" x1="0" y1="0" x2="0" y2="1"><stop offset="0" stop-color="#c8c8c8"/><stop offset="1" stop-color="#565656"/></linearGradient></defs><rect x="0.5" y="9.5" width="13.5" height="5.5" fill="url(#ds)"/><rect x="2" y="0.9" width="10.4" height="8.8" fill="#535353" stroke="#d4d4d4" stroke-width="1.5"/></svg>
<span class="t" style="left:951.0px;top:40.1px;font-size:14px;line-height:17px;color:#d0d0d0;letter-spacing:0.06px;font-style:italic;">fx</span>
<svg class="b" style="left:963px;top:51.5px;" width="4" height="3" viewBox="0 0 4 3"><path d="M0 0H4L2 2.5Z" fill="#d0d0d0"/></svg>
<svg class="b" style="left:891px;top:68px;" width="12" height="12" viewBox="0 0 12 12"><rect x="0.5" y="0.5" width="10.4" height="10.4" fill="#535353" stroke="#d2d2d2" stroke-width="1.1"/><rect x="1.20" y="1.20" width="3" height="3" fill="#858585"/><rect x="7.20" y="1.20" width="3" height="3" fill="#858585"/><rect x="4.20" y="4.20" width="3" height="3" fill="#858585"/><rect x="1.20" y="7.20" width="3" height="3" fill="#858585"/><rect x="7.20" y="7.20" width="3" height="3" fill="#858585"/></svg>
<div class="b" style="left:909px;top:63px;width:70px;height:20.5px;background:#474747;border:1px solid #6a6a6a;border-radius:3px;"></div>
<div class="b" style="left:961px;top:64px;width:17px;height:18.5px;background:#4e4e4e;border-radius:0 2px 2px 0;"></div>
<div class="b" style="left:960px;top:63px;width:1px;height:20.5px;background:#6a6a6a;"></div>
<span class="t" style="left:913.0px;top:66.5px;font-size:11.5px;line-height:14px;color:#f0f0f0;letter-spacing:-1.35px;">100%</span>
<svg class="b" style="left:967px;top:69px;" width="5" height="9" viewBox="0 0 5 9"><path d="M0.6 0.6L4.3 4.5L0.6 8.4" fill="none" stroke="#d2d2d2" stroke-width="1.2"/></svg>
<div class="b" style="left:984px;top:36.5px;width:1px;height:47px;background:#484848;"></div>
<div class="b" style="left:991px;top:36px;width:21.5px;height:22px;background:#2b2b2b;border-radius:4px;"></div>
<svg class="b" style="left:995px;top:40px;" width="14" height="13" viewBox="0 0 14 13"><path d="M0 0.7H14M0 3.6H14M0 6.5H14M0 9.4H14M0 12.3H14" stroke="#dcdcdc" stroke-width="1.1"/><path d="M3 3.6H11M3 6.5H11M3 9.4H11" stroke="#f0f0f0" stroke-width="1.5"/></svg>
<svg class="b" style="left:1022px;top:40px;" width="14" height="13" viewBox="0 0 14 13"><path d="M0 0.7H14M0 12.3H14M0 3.6H3.4M0 6.5H3.4M0 9.4H3.4M10.6 3.6H14M10.6 6.5H14M10.6 9.4H14" stroke="#dcdcdc" stroke-width="1.1"/><rect x="4.9" y="2.6" width="4.2" height="7.8" fill="none" stroke="#dcdcdc" stroke-width="1.1"/></svg>
<svg class="b" style="left:995px;top:67px;" width="14" height="13" viewBox="0 0 14 13"><path d="M0 0.7H14M0 12.3H14M0 3.6H2.6M0 6.5H2.2M0 9.4H2.6M11.4 3.6H14M11.8 6.5H14M11.4 9.4H14" stroke="#dcdcdc" stroke-width="1.1"/><ellipse cx="7" cy="6.5" rx="3.7" ry="4" fill="#dcdcdc"/></svg>
<svg class="b" style="left:1022px;top:67px;" width="14" height="13" viewBox="0 0 14 13"><path d="M0 0.7H14M0 9.6H14M0 12.5H14" stroke="#dcdcdc" stroke-width="1.1"/><rect x="3.6" y="3" width="6.8" height="4.4" fill="#dcdcdc"/></svg>
<div class="b" style="left:1046.5px;top:36.5px;width:1px;height:47px;background:#484848;"></div>
<svg class="b" style="left:1054px;top:41px;" width="14" height="14" viewBox="0 0 14 14"><rect x="3" y="3" width="8" height="8" fill="none" stroke="#a4a4a4" stroke-width="1.4" stroke-dasharray="2.4 1.6" stroke-dashoffset="-1.2"/><rect x="0" y="0" width="3.6" height="3.6" fill="#2d8ceb"/><rect x="10.4" y="0" width="3.6" height="3.6" fill="#2d8ceb"/><rect x="0" y="10.4" width="3.6" height="3.6" fill="#2d8ceb"/><rect x="10.4" y="10.4" width="3.6" height="3.6" fill="#2d8ceb"/></svg>
<div class="b" style="left:1073.5px;top:37px;width:86.5px;height:20.5px;background:#474747;border:1px solid #6a6a6a;border-radius:3px;"></div>
<div class="b" style="left:1074.5px;top:38px;width:15.5px;height:18.5px;background:#505050;border-radius:2px 0 0 2px;"></div>
<div class="b" style="left:1090px;top:37px;width:1px;height:20.5px;background:#6a6a6a;"></div>
<svg class="b" style="left:1078px;top:41px;" width="8" height="4" viewBox="0 0 8 4"><path d="M0.5 3.7L4 0.6L7.5 3.7" fill="none" stroke="#d0d0d0" stroke-width="1.1"/></svg><svg class="b" style="left:1078px;top:50.5px;" width="8" height="4" viewBox="0 0 8 4"><path d="M0.5 0.3L4 3.4L7.5 0.3" fill="none" stroke="#d0d0d0" stroke-width="1.1"/></svg>
<span class="t" style="left:1095.0px;top:40.9px;font-size:10.5px;line-height:13px;color:#f0f0f0;letter-spacing:-0.52px;">4.233 mm</span>
<div class="b" style="left:1073.5px;top:63px;width:86.5px;height:20.5px;background:#474747;border:1px solid #6a6a6a;border-radius:3px;"></div>
<div class="b" style="left:1074.5px;top:64px;width:66.5px;height:18.5px;background:#e0e0e0;border-radius:2px 0 0 2px;"></div>
<div class="b" style="left:1141px;top:64px;width:18px;height:18.5px;background:#4e4e4e;border-radius:0 2px 2px 0;"></div>
<svg class="b" style="left:1076px;top:65.5px;" width="62" height="17" viewBox="0 0 62 17"><path d="M0 1H60.5V16" fill="none" stroke="#222" stroke-width="1.6"/></svg>
<svg class="b" style="left:1146.5px;top:71.5px;" width="8" height="4.5" viewBox="0 0 8 4.5"><path d="M0.5 0.5L4.0 4.0L7.5 0.5" fill="none" stroke="#d2d2d2" stroke-width="1.2"/></svg>
<div class="b" style="left:1165.5px;top:36.5px;width:1px;height:47px;background:#484848;"></div>
<svg class="b" style="left:1316px;top:51px;" width="12" height="17" viewBox="0 0 12 17"><path d="M7.8 0.3L0.8 9.6H5.6L3.6 16.6L11 6.8H6.2Z" fill="#c4c4c4"/></svg>
<div class="b" style="left:1336.5px;top:36.5px;width:1px;height:47px;background:#484848;"></div>
<svg class="b" style="left:1346.5px;top:41.5px;" width="11" height="11" viewBox="0 0 11 11"><circle cx="5.5" cy="5.5" r="3.1" fill="none" stroke="#cfcfcf" stroke-width="2.2"/><rect x="4.5" y="-0.2" width="2" height="2.4" fill="#cfcfcf" transform="rotate(0 5.5 5.5)"/><rect x="4.5" y="-0.2" width="2" height="2.4" fill="#cfcfcf" transform="rotate(45 5.5 5.5)"/><rect x="4.5" y="-0.2" width="2" height="2.4" fill="#cfcfcf" transform="rotate(90 5.5 5.5)"/><rect x="4.5" y="-0.2" width="2" height="2.4" fill="#cfcfcf" transform="rotate(135 5.5 5.5)"/><rect x="4.5" y="-0.2" width="2" height="2.4" fill="#cfcfcf" transform="rotate(180 5.5 5.5)"/><rect x="4.5" y="-0.2" width="2" height="2.4" fill="#cfcfcf" transform="rotate(225 5.5 5.5)"/><rect x="4.5" y="-0.2" width="2" height="2.4" fill="#cfcfcf" transform="rotate(270 5.5 5.5)"/><rect x="4.5" y="-0.2" width="2" height="2.4" fill="#cfcfcf" transform="rotate(315 5.5 5.5)"/></svg>
<svg class="b" style="left:1346px;top:69.5px;" width="12" height="8" viewBox="0 0 12 8"><path d="M0 0.7H12M0 4H12M0 7.3H12" stroke="#cfcfcf" stroke-width="1.2"/></svg>
<!-- tools -->
<div class="b" style="left:0px;top:91px;width:40px;height:637px;background:#535353;"></div>
<div class="b" style="left:40px;top:91px;width:2px;height:637px;background:#3b3b3b;"></div>
<div class="b" style="left:0px;top:91px;width:1px;height:637px;background:#484848;"></div>
<div class="b" style="left:0px;top:91px;width:40px;height:11px;background:#4a4a4a;"></div>
<div class="b" style="left:0px;top:102px;width:40px;height:1px;background:#3e3e3e;"></div>
<svg class="b" style="left:6px;top:94px;" width="8" height="6" viewBox="0 0 8 6"><path d="M0 0L3.5 3L0 6ZM4 0L7.5 3L4 6Z" fill="#d8d8d8"/></svg>
<svg class="b" style="left:10px;top:106px;" width="20" height="4" viewBox="0 0 20 4"><path d="M0.5 0V4M2.5 0V4M4.5 0V4M6.5 0V4M8.5 0V4M10.5 0V4M12.5 0V4M14.5 0V4M16.5 0V4M18.5 0V4" stroke="#3d3d3d" stroke-width="1"/></svg>
<div class="b" style="left:6px;top:118px;width:28px;height:22px;background:#2d2d2d;border-radius:4px;"></div>
<svg class="b" style="left:15px;top:121px;" width="13" height="17" viewBox="0 0 13 17"><path d="M0.8 1.2L11.8 10.4L5 11.2L0.8 16Z" fill="none" stroke="#dedede" stroke-width="1.1" stroke-linejoin="miter"/></svg>
<svg class="b" style="left:15px;top:145px;" width="13" height="17" viewBox="0 0 13 17"><path d="M0.4 0.4L12.4 10.2L5.2 11.2L0.4 16.8Z" fill="#c6c6c6"/></svg>
<svg class="b" style="left:14px;top:169px;" width="15" height="17" viewBox="0 0 15 17"><path d="M0.7 0.7H7.5L11.3 4.5V8.5M0.7 0.7V13.3H8" fill="none" stroke="#c6c6c6" stroke-width="1.3"/><path d="M7.3 0.7V4.7H11.3" fill="none" stroke="#c6c6c6" stroke-width="1.1"/><path d="M9 8.5L14.6 13.2L11.3 13.6L9 16.4Z" fill="#c6c6c6"/></svg>
<svg class="b" style="left:11px;top:194px;" width="18" height="14" viewBox="0 0 18 14"><path d="M0.8 0V14M17.2 0V14" stroke="#c6c6c6" stroke-width="1.5"/><path d="M4 7H14" stroke="#c6c6c6" stroke-width="1.3"/><path d="M2.2 7L6 4V10ZM15.8 7L12 4V10Z" fill="#c6c6c6"/></svg>
<svg class="b" style="left:13px;top:217px;" width="15" height="16" viewBox="0 0 15 16"><path d="M0.8 6.5V15.2H14.2V6.5" fill="none" stroke="#c6c6c6" stroke-width="1.5"/><path d="M3 10.5H12M3 13H12" stroke="#c6c6c6" stroke-width="1.4" stroke-dasharray="2 1.2"/><path d="M4.5 0.8L9.5 5.8" stroke="#c6c6c6" stroke-width="1.4"/><path d="M10.3 2.2V6.6H5.9Z" fill="#c6c6c6"/></svg>
<svg class="b" style="left:30.5px;top:232px;" width="3" height="3" viewBox="0 0 3 3"><path d="M3 0V3H0Z" fill="#c6c6c6"/></svg>
<div class="b" style="left:3px;top:238px;width:35px;height:1px;background:#444;"></div>
<svg class="b" style="left:13px;top:245px;" width="14" height="14" viewBox="0 0 14 14"><path d="M0.3 0H13.7V3.2H12.5L12 1.8H8.3V11.6L10.3 12.2V13.5H3.7V12.2L5.7 11.6V1.8H2L1.5 3.2H0.3Z" fill="#c6c6c6"/></svg>
<svg class="b" style="left:30.5px;top:257px;" width="3" height="3" viewBox="0 0 3 3"><path d="M3 0V3H0Z" fill="#c6c6c6"/></svg>
<svg class="b" style="left:12px;top:268px;" width="16" height="15" viewBox="0 0 16 15"><path d="M0.8 14.2L15.2 0.8" stroke="#c6c6c6" stroke-width="1.5"/></svg>
<svg class="b" style="left:11px;top:292px;" width="18" height="17" viewBox="0 0 18 17"><path d="M10.5 1.5L15.8 6.3L13.8 8.6L8.5 3.8Z" fill="#c6c6c6"/><path d="M7.8 4.8L12.8 9.4L10.2 14L1 16.3L2.6 7.2Z" fill="#c6c6c6"/><path d="M1.6 15.7L6.5 10.6" stroke="#535353" stroke-width="1"/><circle cx="7" cy="10.2" r="1.2" fill="#535353"/></svg>
<svg class="b" style="left:30.5px;top:306px;" width="3" height="3" viewBox="0 0 3 3"><path d="M3 0V3H0Z" fill="#c6c6c6"/></svg>
<svg class="b" style="left:11px;top:315px;" width="18" height="18" viewBox="0 0 18 18"><path d="M12.3 1L16.6 5.2L14.6 7.2L10.3 3Z" fill="#c6c6c6"/><path d="M9.5 3.8L13.8 8L5.6 15.4L1 16.6L2 12Z" fill="#c6c6c6"/><path d="M1.3 16.3L3.3 14.1" stroke="#535353" stroke-width="1"/></svg>
<svg class="b" style="left:30.5px;top:330px;" width="3" height="3" viewBox="0 0 3 3"><path d="M3 0V3H0Z" fill="#c6c6c6"/></svg>
<svg class="b" style="left:12px;top:341px;" width="16" height="14" viewBox="0 0 16 14"><rect x="0.7" y="0.7" width="14.6" height="12.6" fill="none" stroke="#c6c6c6" stroke-width="1.3"/><path d="M0.7 0.7L15.3 13.3M15.3 0.7L0.7 13.3" stroke="#c6c6c6" stroke-width="1.2"/></svg>
<svg class="b" style="left:30.5px;top:354px;" width="3" height="3" viewBox="0 0 3 3"><path d="M3 0V3H0Z" fill="#c6c6c6"/></svg>
<svg class="b" style="left:12px;top:365px;" width="16" height="14" viewBox="0 0 16 14"><rect x="0.7" y="0.7" width="14.6" height="12.6" fill="#6c6c6c" stroke="#c6c6c6" stroke-width="1.3"/></svg>
<svg class="b" style="left:30.5px;top:378px;" width="3" height="3" viewBox="0 0 3 3"><path d="M3 0V3H0Z" fill="#c6c6c6"/></svg>
<div class="b" style="left:3px;top:385px;width:35px;height:1px;background:#444;"></div>
<svg class="b" style="left:11px;top:391px;" width="18" height="17" viewBox="0 0 18 17"><path d="M0.9 4.4L13.2 11.8M0.9 12.2L13.2 4.6" stroke="#c6c6c6" stroke-width="2.3" stroke-linecap="round" fill="none"/><circle cx="15" cy="3" r="2.4" fill="none" stroke="#c6c6c6" stroke-width="1.4"/><circle cx="15" cy="13.4" r="2.4" fill="none" stroke="#c6c6c6" stroke-width="1.4"/></svg>
<svg class="b" style="left:11px;top:415px;" width="20" height="16" viewBox="0 0 20 16"><rect x="5.7" y="1.6" width="12.6" height="12.8" fill="none" stroke="#c6c6c6" stroke-width="1.1"/><rect x="4.7" y="0.6" width="2" height="2" fill="#c6c6c6"/><rect x="11.0" y="0.6" width="2" height="2" fill="#c6c6c6"/><rect x="17.3" y="0.6" width="2" height="2" fill="#c6c6c6"/><rect x="4.7" y="7.0" width="2" height="2" fill="#c6c6c6"/><rect x="17.3" y="7.0" width="2" height="2" fill="#c6c6c6"/><rect x="4.7" y="13.4" width="2" height="2" fill="#c6c6c6"/><rect x="11.0" y="13.4" width="2" height="2" fill="#c6c6c6"/><rect x="17.3" y="13.4" width="2" height="2" fill="#c6c6c6"/><path d="M0 -0.4L10 7.6L4.6 8.2L0 13.6Z" fill="#c6c6c6" stroke="#535353" stroke-width="0.8"/></svg>
<svg class="b" style="left:30.5px;top:429.5px;" width="3" height="3" viewBox="0 0 3 3"><path d="M3 0V3H0Z" fill="#c6c6c6"/></svg>
<svg class="b" style="left:12px;top:440px" width="16" height="14"><defs><linearGradient id="gs"><stop offset="0" stop-color="#d0d0d0"/><stop offset="1" stop-color="#5a5a5a"/></linearGradient><linearGradient id="gf" x1="0" y1="0" x2="0" y2="1"><stop offset="0" stop-color="#5e5e5e"/><stop offset="1" stop-color="#d0d0d0"/></linearGradient></defs><rect x="0.6" y="0.6" width="14.8" height="12.8" fill="url(#gs)" stroke="#c6c6c6" stroke-width="1.2"/></svg>
<svg class="b" style="left:12px;top:464px" width="16" height="14"><rect x="0.6" y="0.6" width="14.8" height="12.8" fill="url(#gf)" stroke="#c6c6c6" stroke-width="1.2"/><path d="M1 3H15" stroke="#7a7a7a" stroke-width="2" stroke-dasharray="2 2"/></svg>
<div class="b" style="left:3px;top:483.5px;width:35px;height:1px;background:#444;"></div>
<svg class="b" style="left:13px;top:491px;" width="14" height="14" viewBox="0 0 14 14"><path d="M0 0H14V9.5L9.5 14H0Z" fill="#c6c6c6"/><path d="M2.5 3.5H11.5M2.5 6.3H11.5M2.5 9.1H7.5" stroke="#535353" stroke-width="1.2"/><path d="M9.5 14V9.5H14Z" fill="#535353" stroke="#c6c6c6" stroke-width="0.8"/></svg>
<svg class="b" style="left:11px;top:513px;" width="20" height="19" viewBox="0 0 20 19"><path d="M10.6 8L2.6 16" stroke="#c6c6c6" stroke-width="4.2" stroke-linecap="round" fill="none"/><path d="M9.6 9L2.8 15.8" stroke="#535353" stroke-width="1.5" stroke-linecap="round" fill="none"/><path d="M8.4 4.8L13.8 10.2" stroke="#c6c6c6" stroke-width="2.4" stroke-linecap="round"/><path d="M11.8 6.6L15 3.4" stroke="#c6c6c6" stroke-width="5" stroke-linecap="round"/><rect x="9.2" y="13" width="10.2" height="4.4" fill="#c6c6c6"/><rect x="10.3" y="14.1" width="2.1" height="2.2" fill="#535353"/><rect x="13.3" y="14.1" width="2.1" height="2.2" fill="#535353"/><rect x="16.3" y="14.1" width="2.1" height="2.2" fill="#535353"/></svg>
<svg class="b" style="left:30.5px;top:529px;" width="3" height="3" viewBox="0 0 3 3"><path d="M3 0V3H0Z" fill="#c6c6c6"/></svg>
<svg class="b" style="left:11.5px;top:537.5px;" width="17" height="17" viewBox="0 0 17 17"><path d="M6.3 9.5L4.7 2.6M8.5 9L8.1 1.6M10.7 9.4L11.5 2.2M12.5 10.4L14.7 5.2" stroke="#c6c6c6" stroke-width="2.3" stroke-linecap="round" fill="none"/><path d="M5.6 12.2L1.5 8.8" stroke="#c6c6c6" stroke-width="2.6" stroke-linecap="round"/><path d="M4.4 8.4L13.8 9.2L13.2 12.6Q11.8 16.6 8.6 16.6Q5.4 16.6 3.6 11.6Z" fill="#c6c6c6"/></svg>
<svg class="b" style="left:11.5px;top:562px;" width="17" height="17" viewBox="0 0 17 17"><circle cx="6.4" cy="6.4" r="5.3" fill="none" stroke="#c6c6c6" stroke-width="1.5"/><path d="M10.4 10.4L16 16" stroke="#c6c6c6" stroke-width="2.2"/></svg>
<div class="b" style="left:3px;top:583px;width:35px;height:1px;background:#444;"></div>
<svg class="b" style="left:5px;top:588px;" width="13" height="12" viewBox="0 0 13 12"><rect x="4.5" y="3.5" width="7.5" height="7.5" fill="#000" stroke="#c8c8c8" stroke-width="1"/><rect x="7" y="6" width="2.5" height="2.5" fill="#535353"/><rect x="0.5" y="0.5" width="7.5" height="7" fill="#fff" stroke="#c8c8c8" stroke-width="1"/><path d="M0.8 7.2L7.7 0.8" stroke="#ee1c24" stroke-width="1.2"/></svg>
<svg class="b" style="left:24.5px;top:590px;" width="11" height="12" viewBox="0 0 11 12"><path d="M2.5 2.5H7Q8.5 2.5 8.5 4V9" fill="none" stroke="#c6c6c6" stroke-width="1.3"/><path d="M3.6 0L0 2.5L3.6 5Z" fill="#c6c6c6"/><path d="M6 8.2L8.5 12L11 8.2Z" fill="#c6c6c6"/></svg>
<svg class="b" style="left:14.5px;top:614px;" width="19.5" height="19.5" viewBox="0 0 19.5 19.5"><rect x="0" y="0" width="19.5" height="19.5" fill="#000"/><rect x="5.5" y="5.5" width="8.5" height="8.5" fill="#4a4a4a"/></svg>
<svg class="b" style="left:5.5px;top:605px;" width="20" height="19.5" viewBox="0 0 20 19.5"><rect x="0" y="0" width="20" height="19.5" fill="#fff" stroke="#aaa" stroke-width="0.6"/><path d="M0.4 19.1L19.6 0.4" stroke="#ee1c24" stroke-width="1.8"/></svg>
<div class="b" style="left:5.5px;top:640.5px;width:14.5px;height:13.5px;background:#2d2d2d;border-radius:2px;"></div>
<svg class="b" style="left:8.5px;top:643px;" width="9" height="9" viewBox="0 0 9 9"><rect x="0.6" y="0.6" width="7.8" height="7.8" fill="none" stroke="#c6c6c6" stroke-width="1.2"/></svg>
<span class="t sf" style="left:24.5px;top:640.3px;font-size:12.5px;line-height:15px;color:#c6c6c6;font-weight:700;letter-spacing:0.66px;">T</span>
<div class="b" style="left:5.5px;top:660px;width:28.5px;height:22px;background:#2d2d2d;border-radius:4px;"></div>
<svg class="b" style="left:12px;top:664px;" width="16" height="14" viewBox="0 0 16 14"><rect x="0" y="0" width="16" height="14" fill="#fff"/><path d="M0.4 13.6L15.6 0.4" stroke="#ee1c24" stroke-width="1.7"/></svg>
<svg class="b" style="left:30px;top:676.5px;" width="3" height="3" viewBox="0 0 3 3"><path d="M3 0V3H0Z" fill="#c6c6c6"/></svg>
<div class="b" style="left:5.5px;top:689px;width:28.5px;height:22px;background:#2d2d2d;border-radius:4px;"></div>
<svg class="b" style="left:14px;top:695px;" width="12" height="12" viewBox="0 0 12 12"><rect x="0.5" y="0.5" width="11" height="11" fill="none" stroke="#c6c6c6" stroke-width="1"/><rect x="3" y="3" width="4.5" height="4" fill="none" stroke="#c6c6c6" stroke-width="1"/><rect x="5" y="5" width="4.5" height="4" fill="#2d2d2d" stroke="#c6c6c6" stroke-width="1"/></svg>
<svg class="b" style="left:30px;top:705.5px;" width="3" height="3" viewBox="0 0 3 3"><path d="M3 0V3H0Z" fill="#c6c6c6"/></svg>
<!-- panel -->
<div class="b" style="left:1163px;top:120px;width:15px;height:591px;background:#4a4a4a;"></div>
<div class="b" style="left:1163.5px;top:190px;width:14.5px;height:441px;background:#6b6b6b;border-radius:7px;"></div>
<svg class="b" style="left:1167px;top:125px;" width="8" height="5" viewBox="0 0 8 5"><path d="M0.5 4.5L4 0.8L7.5 4.5" fill="none" stroke="#bdbdbd" stroke-width="1.1"/></svg>
<svg class="b" style="left:1167px;top:701px;" width="8" height="5" viewBox="0 0 8 5"><path d="M0.5 0.5L4 4.2L7.5 0.5" fill="none" stroke="#bdbdbd" stroke-width="1.1"/></svg>
<div class="b" style="left:1178px;top:91px;width:3px;height:637px;background:#3a3a3a;"></div>
<div class="b" style="left:1179px;top:91px;width:1px;height:637px;background:#4c4c4c;"></div>
<div class="b" style="left:1181px;top:91px;width:185px;height:637px;background:#535353;"></div>
<div class="b" style="left:1181px;top:91px;width:185px;height:11px;background:#444444;"></div>
<div class="b" style="left:1181px;top:102px;width:185px;height:1px;background:#3e3e3e;"></div>
<svg class="b" style="left:1352px;top:94px;" width="8" height="6" viewBox="0 0 8 6"><path d="M3.5 0L0 3L3.5 6ZM7.5 0L4 3L7.5 6Z" fill="#d8d8d8"/></svg>
<div class="b" style="left:1181px;top:199px;width:185px;height:1px;background:#3e3e3e;"></div>
<div class="b" style="left:1181px;top:268px;width:185px;height:1px;background:#3e3e3e;"></div>
<div class="b" style="left:1181px;top:337px;width:185px;height:1px;background:#3e3e3e;"></div>
<svg class="b" style="left:1263px;top:106px;" width="20" height="4" viewBox="0 0 20 4"><path d="M0.5 0V4M2.5 0V4M4.5 0V4M6.5 0V4M8.5 0V4M10.5 0V4M12.5 0V4M14.5 0V4M16.5 0V4M18.5 0V4" stroke="#3d3d3d" stroke-width="1"/></svg>
<svg class="b" style="left:1263px;top:203px;" width="20" height="4" viewBox="0 0 20 4"><path d="M0.5 0V4M2.5 0V4M4.5 0V4M6.5 0V4M8.5 0V4M10.5 0V4M12.5 0V4M14.5 0V4M16.5 0V4M18.5 0V4" stroke="#3d3d3d" stroke-width="1"/></svg>
<svg class="b" style="left:1263px;top:272px;" width="20" height="4" viewBox="0 0 20 4"><path d="M0.5 0V4M2.5 0V4M4.5 0V4M6.5 0V4M8.5 0V4M10.5 0V4M12.5 0V4M14.5 0V4M16.5 0V4M18.5 0V4" stroke="#3d3d3d" stroke-width="1"/></svg>
<svg class="b" style="left:1191.5px;top:117px;" width="18" height="19" viewBox="0 0 18 19"><path d="M0.2 6.6L3.8 3H7.6V15.8H0.2ZM17.8 6.6L14.2 3H10.4V15.8H17.8Z" fill="#c8c8c8"/><path d="M9 0V19" stroke="#c8c8c8" stroke-width="1"/><path d="M0.4 6.9H4.1V3.2M17.6 6.9H13.9V3.2" fill="none" stroke="#535353" stroke-width="0.9"/></svg>
<span class="t" style="left:1218.3px;top:120.0px;font-size:11.3px;line-height:14px;color:#ececec;font-weight:700;letter-spacing:-0.56px;">Pages</span>
<svg class="b" style="left:1191.5px;top:145.5px;" width="18" height="18" viewBox="0 0 18 18"><path d="M9 0.2L17.8 6L9 11.8L0.2 6Z" fill="#c8c8c8"/><path d="M0.2 10.8L2.6 9.3L9 13.5L15.4 9.3L17.8 10.8L9 17.8Z" fill="#c8c8c8"/></svg>
<span class="t" style="left:1218.3px;top:148.0px;font-size:11.3px;line-height:14px;color:#ececec;font-weight:700;letter-spacing:-0.66px;">Layers</span>
<svg class="b" style="left:1191px;top:177.5px;" width="20" height="10" viewBox="0 0 20 10"><rect x="1" y="1" width="10.6" height="7.4" rx="3.7" fill="none" stroke="#c8c8c8" stroke-width="2"/><rect x="7.6" y="1" width="10.6" height="7.4" rx="3.7" fill="none" stroke="#c8c8c8" stroke-width="2"/><path d="M7.6 3.4V6" stroke="#535353" stroke-width="2.2"/><path d="M11.6 3.4V6" stroke="#535353" stroke-width="0"/></svg>
<span class="t" style="left:1218.3px;top:176.0px;font-size:11.3px;line-height:14px;color:#ececec;font-weight:700;letter-spacing:-0.60px;">Links</span>
<svg class="b" style="left:1192px;top:217px;" width="17" height="13" viewBox="0 0 17 13"><path d="M0 0.6H17" stroke="#c8c8c8" stroke-width="1.2"/><path d="M0 5.5H17" stroke="#c8c8c8" stroke-width="2"/><path d="M0 11.2H17" stroke="#c8c8c8" stroke-width="3.2"/></svg>
<span class="t" style="left:1218.3px;top:217.0px;font-size:11.3px;line-height:14px;color:#ececec;font-weight:700;letter-spacing:-0.36px;">Stroke</span>
<svg class="b" style="left:1190.5px;top:243.5px;" width="20" height="15" viewBox="0 0 20 15"><path d="M9.5 0.6C4 0.6 0.4 3.8 0.4 7.6C0.4 11.6 4.6 14.4 10 14.4C15.6 14.4 19.6 11.4 19.6 7.4C19.6 5 18 3.4 16 3.8C14.4 4.2 14.6 5.8 13.4 6C11.8 6.2 11.6 4.4 12.4 3C13 1.6 12 0.6 9.5 0.6Z" fill="#c8c8c8"/><circle cx="4.6" cy="8.6" r="1.3" fill="#535353"/><circle cx="8" cy="11" r="1.3" fill="#535353"/><circle cx="12" cy="11.2" r="1.3" fill="#535353"/><circle cx="15.4" cy="9.4" r="1.3" fill="#535353"/><circle cx="5.4" cy="4.8" r="1.2" fill="#535353"/></svg>
<span class="t" style="left:1218.3px;top:245.0px;font-size:11.3px;line-height:14px;color:#ececec;font-weight:700;letter-spacing:-0.23px;">Colour</span>
<svg class="b" style="left:1192px;top:287px;" width="16" height="11" viewBox="0 0 16 11"><rect x="0" y="0" width="16" height="11" fill="#c8c8c8"/><rect x="1.5" y="1.5" width="3.5" height="3.5" fill="#535353"/><rect x="6.3" y="1.5" width="3.5" height="3.5" fill="#7a7a7a"/><rect x="11" y="1.5" width="3.5" height="3.5" fill="#535353"/><rect x="1.5" y="6" width="3.5" height="3.5" fill="#7a7a7a"/><rect x="6.3" y="6" width="3.5" height="3.5" fill="#535353"/><rect x="11" y="6" width="3.5" height="3.5" fill="#7a7a7a"/></svg>
<span class="t" style="left:1218.3px;top:286.0px;font-size:11.3px;line-height:14px;color:#ececec;font-weight:700;letter-spacing:-0.52px;">Swatches</span>
<svg class="b" style="left:1190px;top:312.3px;" width="22" height="16" viewBox="0 0 22 16"><ellipse cx="11" cy="8" rx="10" ry="7" fill="#6a6a6a" stroke="#c8c8c8" stroke-width="1.3"/><path d="M6.5 10.8A3.2 3.2 0 1 1 9.5 5.5L13.5 9.5A3 3 0 1 0 13 5" fill="none" stroke="#c8c8c8" stroke-width="1.4"/></svg>
<span class="t" style="left:1218.3px;top:314.0px;font-size:11.3px;line-height:14px;color:#ececec;font-weight:700;letter-spacing:-0.52px;">CC Libraries</span>
<!-- status -->
<div class="b" style="left:42px;top:711px;width:1136px;height:17px;background:#535353;"></div>
<div class="b" style="left:42px;top:710.5px;width:1136px;height:0.8px;background:#484848;"></div>
<svg class="b" style="left:54px;top:715px;" width="9" height="9" viewBox="0 0 9 9"><path d="M1 0V9" stroke="#7f7f7f" stroke-width="1.6"/><path d="M8.5 0V9L2.5 4.5Z" fill="#7f7f7f"/></svg>
<svg class="b" style="left:75px;top:715px;" width="6" height="9" viewBox="0 0 6 9"><path d="M6 0V9L0 4.5Z" fill="#7f7f7f"/></svg>
<div class="b" style="left:93.5px;top:711.3px;width:90.5px;height:15.4px;background:#474747;border:1px solid #6a6a6a;border-radius:3px;"></div>
<div class="b" style="left:166px;top:712.3px;width:17px;height:13.4px;background:#4e4e4e;border-radius:0 2px 2px 0;"></div>
<div class="b" style="left:165px;top:711.3px;width:1px;height:15.4px;background:#6a6a6a;"></div>
<span class="t" style="left:97.5px;top:712.9px;font-size:10.5px;line-height:13px;color:#f0f0f0;">1</span>
<svg class="b" style="left:170.5px;top:716.8px;" width="8" height="4.5" viewBox="0 0 8 4.5"><path d="M0.5 0.5L4.0 4.0L7.5 0.5" fill="none" stroke="#d2d2d2" stroke-width="1.1"/></svg>
<svg class="b" style="left:197.5px;top:715px;" width="6" height="9" viewBox="0 0 6 9"><path d="M0 0V9L6 4.5Z" fill="#7f7f7f"/></svg>
<svg class="b" style="left:215px;top:715px;" width="9" height="9" viewBox="0 0 9 9"><path d="M8 0V9" stroke="#7f7f7f" stroke-width="1.6"/><path d="M0.5 0V9L6.5 4.5Z" fill="#7f7f7f"/></svg>
<svg class="b" style="left:240.5px;top:712.5px;" width="18" height="13" viewBox="0 0 18 13"><path d="M2.4 12V6.6A4.7 4.7 0 0 1 11.8 6.6V12" fill="none" stroke="#b4b4b4" stroke-width="3"/><path d="M4 6H10V11H4Z" fill="#b4b4b4"/><path d="M7.4 3.4V7.6H11" fill="none" stroke="#535353" stroke-width="1.1"/><path d="M13.8 10H17L15.4 12Z" fill="#b4b4b4"/></svg>
<span class="t" style="left:273.0px;top:712.2px;font-size:11px;line-height:13px;color:#e6e6e6;letter-spacing:-0.25px;">[Basic] (working)</span>
<svg class="b" style="left:375.5px;top:716.6px;" width="8" height="4.5" viewBox="0 0 8 4.5"><path d="M0.5 0.5L4.0 4.0L7.5 0.5" fill="none" stroke="#d2d2d2" stroke-width="1.1"/></svg>
<div class="b" style="left:399px;top:713.5px;width:10.5px;height:10.5px;background:#3bb54a;border-radius:50%;"></div>
<span class="t" style="left:415.0px;top:712.2px;font-size:11px;line-height:13px;color:#e6e6e6;letter-spacing:-0.48px;">No errors</span>
<svg class="b" style="left:477.5px;top:716.6px;" width="8" height="4.5" viewBox="0 0 8 4.5"><path d="M0.5 0.5L4.0 4.0L7.5 0.5" fill="none" stroke="#d2d2d2" stroke-width="1.1"/></svg>
<div class="b" style="left:490.5px;top:711px;width:651px;height:17px;background:#4a4a4a;"></div>
<svg class="b" style="left:497px;top:715.5px;" width="5" height="8" viewBox="0 0 5 8"><path d="M4.3 0.5L0.7 4L4.3 7.5" fill="none" stroke="#7a7a7a" stroke-width="1.1"/></svg>
<div class="b" style="left:787px;top:712.5px;width:212.5px;height:14.5px;background:#6b6b6b;border-radius:7px;"></div>
<svg class="b" style="left:1130px;top:715.5px;" width="5" height="8" viewBox="0 0 5 8"><path d="M0.7 0.5L4.3 4L0.7 7.5" fill="none" stroke="#7a7a7a" stroke-width="1.1"/></svg>
<svg class="b" style="left:1145px;top:714px;" width="16" height="11" viewBox="0 0 16 11"><rect x="0.6" y="0.6" width="14.8" height="9.8" fill="none" stroke="#c8c8c8" stroke-width="1.2"/><path d="M8 0V11" stroke="#c8c8c8" stroke-width="1.2"/></svg>
<svg class="b" style="left:1167px;top:716px;" width="10" height="10" viewBox="0 0 10 10"><rect x="0" y="8" width="1" height="1" fill="#6c6c6c"/><rect x="2" y="6" width="1" height="1" fill="#6c6c6c"/><rect x="2" y="8" width="1" height="1" fill="#6c6c6c"/><rect x="4" y="4" width="1" height="1" fill="#6c6c6c"/><rect x="4" y="6" width="1" height="1" fill="#6c6c6c"/><rect x="4" y="8" width="1" height="1" fill="#6c6c6c"/><rect x="6" y="2" width="1" height="1" fill="#6c6c6c"/><rect x="6" y="4" width="1" height="1" fill="#6c6c6c"/><rect x="6" y="6" width="1" height="1" fill="#6c6c6c"/><rect x="6" y="8" width="1" height="1" fill="#6c6c6c"/><rect x="8" y="0" width="1" height="1" fill="#6c6c6c"/><rect x="8" y="2" width="1" height="1" fill="#6c6c6c"/><rect x="8" y="4" width="1" height="1" fill="#6c6c6c"/><rect x="8" y="6" width="1" height="1" fill="#6c6c6c"/><rect x="8" y="8" width="1" height="1" fill="#6c6c6c"/></svg>
<div class="b" style="left:0px;top:727px;width:1366px;height:1px;background:#3a3a3a;"></div>
<!-- taskbar -->
<div class="b" style="left:0px;top:728px;width:1366px;height:40px;background:#0b0a09;"></div>
<div class="b" style="left:519px;top:728px;width:160px;height:40px;background:#3b3a38;"></div>
<div class="b" style="left:201px;top:766px;width:152px;height:2px;background:#f8dfb9;"></div>
<div class="b" style="left:362px;top:766px;width:152px;height:2px;background:#f8dfb9;"></div>
<div class="b" style="left:519px;top:766px;width:160px;height:2px;background:#f8dfb9;"></div>
<div class="b" style="left:684px;top:766px;width:151px;height:2px;background:#f8dfb9;"></div>
<svg class="b" style="left:16px;top:740px;" width="17" height="17" viewBox="0 0 17 17"><path d="M0 2.4L7 1.4V8H0ZM8 1.25L16.6 0V8H8ZM0 9H7V15.6L0 14.6ZM8 9H16.6V17L8 15.75Z" fill="#ffffff"/></svg>
<svg class="b" style="left:61.5px;top:741px;" width="21" height="14" viewBox="0 0 21 14"><rect x="4.6" y="0.75" width="11.8" height="12.5" fill="none" stroke="#ffffff" stroke-width="1.5"/><path d="M2.8 2.5H0.7V11.5H2.8M18.2 2.5H20.3V11.5H18.2" fill="none" stroke="#ffffff" stroke-width="1.3"/></svg>
<svg class="b" style="left:113px;top:737px;" width="21" height="22" viewBox="0 0 21 22"><path d="M1 10.5C1.6 4.5 6 0.5 11.3 0.5C17 0.5 20.5 4.6 20.5 10.2V12.6H7.3C7.5 15.8 10 17.4 13.2 17.4C15.6 17.4 17.8 16.7 19.6 15.6V20C17.6 21.1 15.2 21.6 12.4 21.6C6 21.6 2.4 17.6 2.4 12.6C2.4 9.4 4 6.8 6.6 5.3C3.8 6 1.9 8 1 10.5ZM7.4 8.8H14.8C14.8 6 13.4 4.4 11.2 4.4C9 4.4 7.6 6.2 7.4 8.8Z" fill="#1e7be0"/></svg>
<svg class="b" style="left:161px;top:739px;" width="22" height="18" viewBox="0 0 22 18"><path d="M0.5 1.2Q0.5 0.4 1.3 0.4H8L9.6 2.2H20.7Q21.5 2.2 21.5 3V17.6H0.5Z" fill="#f6d776"/><rect x="1.2" y="1.1" width="5" height="1" fill="#e8b94a"/><rect x="0.5" y="4" width="21" height="13.6" fill="#fbe49a"/><path d="M5.2 17.6V10.8H16.8V17.6H13.6V13.6H8.4V17.6Z" fill="#2b9ae8"/></svg>
<svg class="b" style="left:207.5px;top:736.5px;" width="23" height="23" viewBox="0 0 23 23"><circle cx="11.5" cy="11.5" r="11.3" fill="#dd4b3e"/><path d="M11.5 11.5L1.7 5.85A11.3 11.3 0 0 0 11.9 22.8L16.4 14.3Z" fill="#1fa463"/><path d="M11.5 11.5H22.6A11.3 11.3 0 0 1 11.5 22.8L6.6 14.3Z" fill="#fcd045" transform="rotate(0)"/><path d="M11.5 6.4H21.6A11.3 11.3 0 0 1 11.9 22.8L16 14Z" fill="#fcd045"/><path d="M1.7 5.85A11.3 11.3 0 0 1 21.6 6.4H11.5A5.1 5.1 0 0 0 7 9Z" fill="#dd4b3e"/><circle cx="11.5" cy="11.5" r="5.1" fill="#fff"/><circle cx="11.5" cy="11.5" r="4.1" fill="#4a8af4"/></svg>
<span class="t" style="left:233.5px;top:740.5px;font-size:12.5px;line-height:15px;color:#ffffff;letter-spacing:-0.32px;">size of a3 - Google ...</span>
<svg class="b" style="left:368.5px;top:736.5px;" width="22.5" height="22.5" viewBox="0 0 22.5 22.5"><rect x="9" y="5" width="13" height="11.5" fill="#0a6fc9"/><path d="M11 7.2H20.6V14.3H11Z" fill="#fff"/><path d="M11 7.4L15.8 11.6L20.6 7.4" fill="none" stroke="#0a6fc9" stroke-width="1.3"/><path d="M0.3 2.6L13.2 0.2V22.3L0.3 19.6Z" fill="#0a6fc9"/><ellipse cx="6.8" cy="11.2" rx="3" ry="3.8" fill="none" stroke="#fff" stroke-width="1.7"/></svg>
<span class="t" style="left:395.3px;top:740.5px;font-size:12.5px;line-height:15px;color:#ffffff;letter-spacing:-0.17px;">Inbox - niall.finn@...</span>
<div class="b" style="left:530.5px;top:737px;width:20.5px;height:20px;background:#2e0019;border:2px solid #ff3d8f;"></div>
<span class="t" style="left:535.5px;top:740.2px;font-size:12.5px;line-height:15px;color:#ff3d8f;font-weight:700;letter-spacing:-0.05px;">Id</span>
<span class="t" style="left:556.0px;top:740.5px;font-size:12.5px;line-height:15px;color:#ffffff;letter-spacing:-0.92px;">*DPS @ 50%</span>
<svg class="b" style="left:690.5px;top:736.5px;" width="23" height="22.5" viewBox="0 0 23 22.5"><rect x="10" y="3" width="12.6" height="16.5" fill="#fff" stroke="#2a5699" stroke-width="0.8"/><path d="M14.5 5.8H20.6M14.5 8H20.6M14.5 10.2H20.6M14.5 12.4H20.6M14.5 14.6H20.6M14.5 16.8H20.6" stroke="#2a5699" stroke-width="1.1"/><path d="M0.3 2.6L13.4 0.2V22.3L0.3 19.6Z" fill="#2a5699"/><path d="M2.6 7.5L4.4 15L6.7 8.5L9 15L10.9 7.5" fill="none" stroke="#fff" stroke-width="1.4"/></svg>
<span class="t" style="left:717.5px;top:740.5px;font-size:12.5px;line-height:15px;color:#ffffff;letter-spacing:-0.10px;">Document1 - Word</span>
<svg class="b" style="left:984.5px;top:743px;" width="14" height="10" viewBox="0 0 14 10"><path d="M5 8.8H4.4A3.7 3.7 0 1 1 7.2 2.6L10.2 6.2" fill="none" stroke="#ffffff" stroke-width="1.5" stroke-linecap="round"/><path d="M5.6 4.4A3.1 3.1 0 0 1 9.6 2.2A3.4 3.4 0 0 1 9.6 8.8H7.6L5 5.8" fill="none" stroke="#ffffff" stroke-width="1.5" stroke-linecap="round"/></svg>
<svg class="b" style="left:1007px;top:740px;" width="16.2" height="16.2" viewBox="0 0 22.5 22.5"><rect x="9" y="5" width="13" height="11.5" fill="#0a6fc9"/><path d="M11 7.2H20.6V14.3H11Z" fill="#fff"/><path d="M11 7.4L15.8 11.6L20.6 7.4" fill="none" stroke="#0a6fc9" stroke-width="1.3"/><path d="M0.3 2.6L13.2 0.2V22.3L0.3 19.6Z" fill="#0a6fc9"/><ellipse cx="6.8" cy="11.2" rx="3" ry="3.8" fill="none" stroke="#fff" stroke-width="1.7"/></svg>
<svg class="b" style="left:1031px;top:740px;" width="16" height="16" viewBox="0 0 16 16"><rect x="0" y="0" width="16" height="16" rx="2" fill="#3d9bdc"/><rect x="0.8" y="0.8" width="14.4" height="14.4" rx="1.5" fill="none" stroke="#8fd0f5" stroke-width="0.8"/><path d="M3 5H10V9H3ZM6 9V12H12V8" fill="none" stroke="#bfe6fb" stroke-width="1"/><path d="M0.5 13L3 15.5H1.5Q0.5 15.5 0.5 14.5Z" fill="#e8a33a"/><path d="M0.5 14L2.5 15.8" stroke="#d84a38" stroke-width="0.8"/></svg>
<svg class="b" style="left:1057px;top:740px;" width="12" height="16" viewBox="0 0 12 16"><ellipse cx="6" cy="8" rx="5.8" ry="8" fill="#0a3b8c"/><path d="M3 5L9 11L6 13.6V2.4L9 5L3 11" fill="none" stroke="#fff" stroke-width="1.1"/></svg>
<svg class="b" style="left:1079px;top:741px;" width="17" height="15" viewBox="0 0 17 15"><path d="M3.6 11.6A3 3 0 0 1 3.2 5.7A4.4 4.4 0 0 1 11.4 4.3A3.6 3.6 0 0 1 16.2 8.2V11.6Z" fill="#ececec"/><path d="M5 9.4A2.2 2.2 0 0 1 7.4 6.4" fill="none" stroke="#8a8a8a" stroke-width="0.9"/><circle cx="12.2" cy="10.9" r="4" fill="#e81123"/><path d="M10.4 9.1L14 12.7M14 9.1L10.4 12.7" stroke="#fff" stroke-width="1.2"/></svg>
<svg class="b" style="left:1103px;top:740px;" width="16" height="16" viewBox="0 0 16 16"><rect x="0" y="0" width="16" height="16" rx="3" fill="#2bb091"/><rect x="2.2" y="4.2" width="10.6" height="7.2" rx="1" fill="none" stroke="#e8fff8" stroke-width="1.3"/><circle cx="11.3" cy="10" r="2.7" fill="#e8fff8"/><path d="M10 10H12.6" stroke="#2bb091" stroke-width="1"/></svg>
<svg class="b" style="left:1127.5px;top:740px;" width="16" height="17" viewBox="0 0 16 17"><path d="M7 0.3C9.2 1.8 11.4 2.4 13.8 2.6V7.5C13.8 11.5 10.8 14.4 7 15.8C3.2 14.4 0.2 11.5 0.2 7.5V2.6C2.6 2.4 4.8 1.8 7 0.3Z" fill="#fff"/><path d="M7 0.3V15.8M0.2 7.6H13.8" stroke="#0e0c0b" stroke-width="1.1"/><circle cx="11.6" cy="12.4" r="4" fill="#16a34a"/><path d="M9.6 12.4L11 13.9L13.6 11" fill="none" stroke="#fff" stroke-width="1.2"/></svg>
<svg class="b" style="left:1151px;top:740px;" width="16" height="16" viewBox="0 0 16 16"><defs><linearGradient id="stm" x1="0" y1="0" x2="0" y2="1"><stop offset="0" stop-color="#13244f"/><stop offset="1" stop-color="#2a78b8"/></linearGradient></defs><circle cx="8" cy="8" r="8" fill="url(#stm)"/><circle cx="10.6" cy="5.8" r="2.6" fill="none" stroke="#fff" stroke-width="1.2"/><path d="M0.6 8.8L5.4 10.8L8.6 7.6" fill="none" stroke="#fff" stroke-width="1.8"/><circle cx="5.4" cy="11" r="1.9" fill="none" stroke="#fff" stroke-width="1"/></svg>
<svg class="b" style="left:1175px;top:741.5px;" width="17" height="12" viewBox="0 0 17 12"><rect x="5.6" y="3.6" width="9.8" height="7.6" fill="none" stroke="#ffffff" stroke-width="1.2"/><rect x="15.6" y="5.6" width="1.2" height="3.6" fill="#ffffff"/><path d="M1.2 0V2.2M4 0V2.2M0.3 2.6H4.9V4.4Q4.9 6 2.6 6.4V9.5H6" fill="none" stroke="#ffffff" stroke-width="1.1"/><rect x="6.4" y="8" width="2.4" height="2.4" fill="#ffffff"/></svg>
<svg class="b" style="left:1201.5px;top:742.5px;" width="14" height="13" viewBox="0 0 14 13"><circle cx="10.6" cy="11.2" r="1.5" fill="#ffffff"/><path d="M6.6 12.4A4.6 4.6 0 0 1 11.6 6.6" fill="none" stroke="#ffffff" stroke-width="1.2"/><path d="M3.6 12.4A7.6 7.6 0 0 1 11.6 3.6" fill="none" stroke="#b8b8b8" stroke-width="1.2"/><path d="M0.6 12.4A10.6 10.6 0 0 1 11.6 0.6" fill="none" stroke="#9a9a9a" stroke-width="1.2"/></svg>
<svg class="b" style="left:1222.5px;top:741px;" width="17" height="14" viewBox="0 0 17 14"><path d="M0.6 4.6H3.2L6.6 1.2V12.6L3.2 9.2H0.6Z" fill="none" stroke="#ffffff" stroke-width="1.1"/><path d="M8.8 4.8Q10.2 6.9 8.8 9" fill="none" stroke="#ffffff" stroke-width="1"/><path d="M11.2 3Q13.6 6.9 11.2 10.8" fill="none" stroke="#cfcfcf" stroke-width="1"/><path d="M13.6 1Q17.2 6.9 13.6 12.8" fill="none" stroke="#8a8a8a" stroke-width="1"/></svg>
<span class="t" style="left:1264.5px;top:731.8px;font-size:12px;line-height:14px;color:#ffffff;letter-spacing:-0.61px;">12:16</span>
<span class="t" style="left:1249.0px;top:749.8px;font-size:12px;line-height:14px;color:#ffffff;letter-spacing:-0.07px;">26/11/2017</span>
<svg class="b" style="left:1325px;top:740px;" width="17" height="15" viewBox="0 0 17 15"><path d="M0 0H16.4V11H8.4L5 14.4V11H0Z" fill="#ffffff"/><path d="M3 3H13.4M3 5.5H13.4M3 8H13.4" stroke="#0e0c0b" stroke-width="1"/></svg>
<div class="b" style="left:1332.5px;top:747px;width:16.5px;height:16.5px;background:#3c3c3c;border:1px solid #8a8a8a;border-radius:50%;"></div>
<span class="t" style="left:1338.0px;top:749.2px;font-size:11px;line-height:13px;color:#ffffff;font-weight:700;">1</span>
<div class="b" style="left:1361.5px;top:728px;width:1px;height:40px;background:#4e4e4e;"></div>
</body></html>
